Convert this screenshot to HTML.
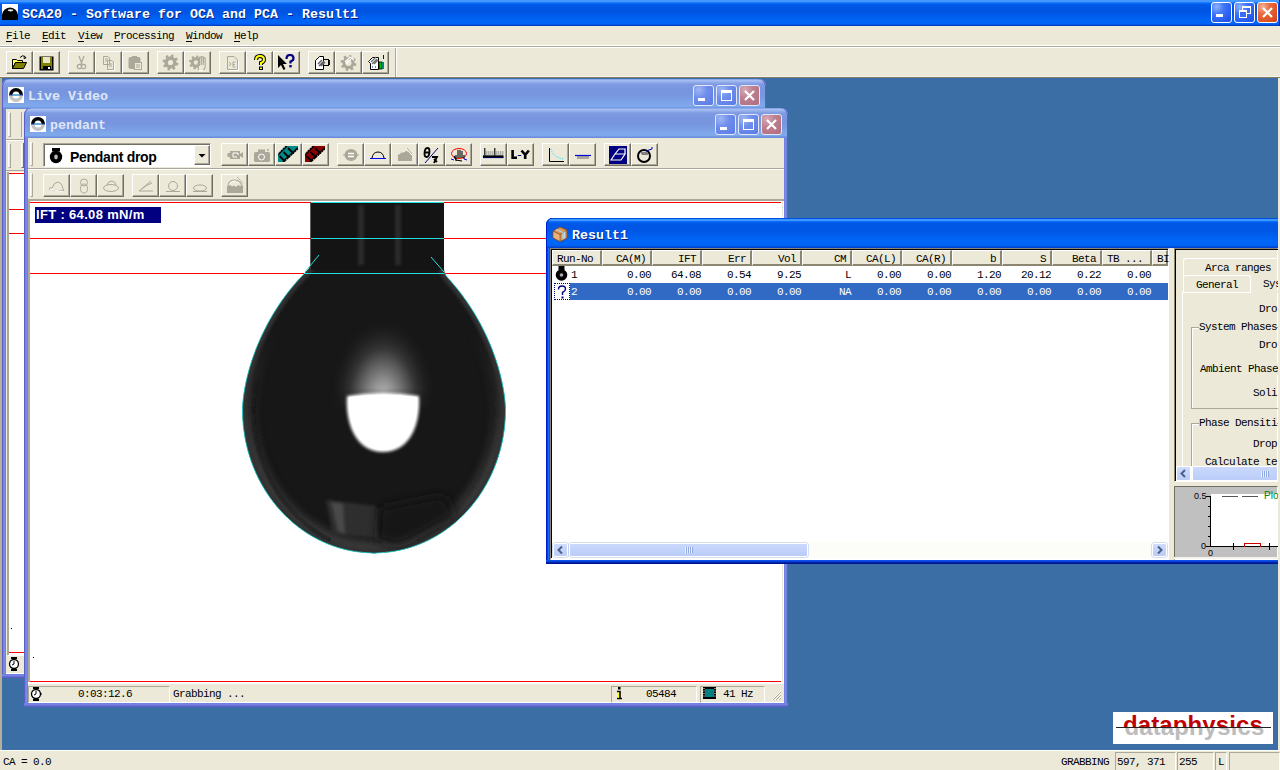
<!DOCTYPE html><html><head><meta charset="utf-8"><title>SCA20</title><style>
*{box-sizing:border-box}
html,body{margin:0;padding:0}
body{width:1280px;height:770px;overflow:hidden;position:relative;background:#ece9d8;font-family:"Liberation Mono",monospace;font-size:12px;color:#000}
.a{position:absolute}
.m{position:absolute;font-family:"Liberation Mono",monospace;font-size:11px;letter-spacing:-0.6px;line-height:12px;white-space:pre}
.tb{position:absolute;width:27px;height:23px;border-style:solid;border-width:1px;border-color:#fff #716f64 #716f64 #fff;box-shadow:inset -1px -1px 0 #aca899;background:#ece9d8}
.tb svg{position:absolute;left:4px;top:3px}
.capT{position:absolute;font-family:"Liberation Mono",monospace;font-weight:bold;font-size:13.33px;line-height:15px;white-space:pre}
.xb{position:absolute;width:21px;height:21px;border:1px solid #fff;border-radius:3px}
.xbA{background:radial-gradient(circle at 25% 20%,#8fb4ff 0,#3f75f8 35%,#2258ee 80%,#1f4fd8 100%)}
.xcA{background:radial-gradient(circle at 25% 20%,#f5b59a 0,#e8693d 35%,#dc4d1f 80%,#c93f16 100%)}
.xbI{background:radial-gradient(circle at 25% 20%,#9fb6f2 0,#6f8eec 40%,#5a7be6 100%);border-color:#e2e8fa}
.xcI{background:radial-gradient(circle at 25% 20%,#d6a9b6 0,#be8090 40%,#ad6d7f 100%);border-color:#e2e8fa}
.sunk{position:absolute;border:1px solid;border-color:#aca899 #fff #fff #aca899}
.grip{position:absolute;width:3px;border-left:1px solid #fff;border-right:1px solid #aca899;border-top:1px solid #fff;border-bottom:1px solid #aca899}
</style></head><body>
<div class="a" style="left:0;top:0;width:1280px;height:26px;background:linear-gradient(to bottom,#4398ff 0px,#4398ff 1.5px,#0a6ffb 3px,#0058e6 5px,#0054e2 12px,#005ff0 17px,#0066f8 22px,#0062f4 24px,#0048d4 25px,#003ac4 26px)"></div>
<div class="a" style="left:1279px;top:0;width:1px;height:26px;background:#0026a0"></div>
<svg class="a" style="left:2px;top:4px" width="16" height="16"><rect width="16" height="16" fill="#fff"/><path d="M0,16 L0,11 Q1,4 8,3.5 Q15,4 16,11 L16,16 Z" fill="#000"/><ellipse cx="8.5" cy="6.3" rx="2.8" ry="1.1" fill="#e8e8e8"/></svg>
<div class="capT" style="left:22px;top:7px;color:#fff;text-shadow:1px 1px 0 #0a1a80">SCA20 - Software for OCA and PCA - Result1</div>
<div class="xb xbA" style="left:1211px;top:2px"><div class="a" style="left:4px;top:11px;width:7px;height:3px;background:#fff"></div></div>
<div class="xb xbA" style="left:1234px;top:2px"><div class="a" style="left:7px;top:3px;width:9px;height:8px;border:1px solid #fff;border-top-width:2px"></div><div class="a" style="left:4px;top:7px;width:8px;height:8px;border:1px solid #fff;border-top-width:2px;background:#3a6cf4"></div></div>
<div class="xb xcA" style="left:1257px;top:2px"><svg class="a" style="left:3px;top:3px" width="13" height="13"><path d="M2,2 L11,11 M11,2 L2,11" stroke="#fff" stroke-width="2.2"/></svg></div>
<div class="m" style="left:6px;top:30px">File</div>
<div class="a" style="left:6px;top:41px;width:6px;height:1px;background:#000"></div>
<div class="m" style="left:42px;top:30px">Edit</div>
<div class="a" style="left:42px;top:41px;width:6px;height:1px;background:#000"></div>
<div class="m" style="left:78px;top:30px">View</div>
<div class="a" style="left:78px;top:41px;width:6px;height:1px;background:#000"></div>
<div class="m" style="left:114px;top:30px">Processing</div>
<div class="a" style="left:114px;top:41px;width:6px;height:1px;background:#000"></div>
<div class="m" style="left:186px;top:30px">Window</div>
<div class="a" style="left:186px;top:41px;width:6px;height:1px;background:#000"></div>
<div class="m" style="left:234px;top:30px">Help</div>
<div class="a" style="left:234px;top:41px;width:6px;height:1px;background:#000"></div>
<div class="a" style="left:0;top:45px;width:1280px;height:1px;background:#fff"></div>
<div class="a" style="left:0;top:46px;width:1280px;height:1px;background:#aca899"></div>
<div class="a" style="left:0;top:47px;width:1280px;height:1px;background:#fff"></div>
<div class="a" style="left:0;top:76px;width:1280px;height:1px;background:#f6f4ea"></div>
<div class="a" style="left:0;top:77px;width:1280px;height:1px;background:#827c69"></div>
<div class="a" style="left:395px;top:48px;width:1px;height:29px;background:#aca899"></div><div class="a" style="left:396px;top:48px;width:1px;height:29px;background:#fff"></div>
<div class="a" style="left:0;top:78px;width:1280px;height:672px;background:#3a6ea5"></div>
<div class="a" style="left:0;top:78px;width:2px;height:672px;background:#b4b09c"></div>
<div class="a" style="left:2px;top:79px;width:764px;height:599px;border-radius:7px 7px 0 0;overflow:hidden;background:#7081e2;box-shadow:inset 1px 0 0 #5b5dc8,inset -1px 0 0 #5b5dc8,inset 2px 0 0 #7583de,inset -2px 0 0 #7583de,inset 3px 0 0 #7a8be2,inset -3px 0 0 #7a8be2,inset 4px 0 0 #7081e2,inset -4px 0 0 #7081e2"><div class="a" style="left:0;top:0;width:764px;height:30px;background:linear-gradient(to bottom,#6e8fe0 0px,#a9c0f2 1px,#a2baf0 2px,#7f9be3 5px,#7896df 10px,#7896df 16px,#7ba0e6 22px,#7fa9ea 26px,#7ea8ea 28px,#6b8bdd 29px,#6b8bdd 30px)"></div><div class="a" style="left:0;top:0;width:764px;height:30px;border-radius:7px 7px 0 0;box-shadow:inset 1px 0 0 #5b5dc8,inset -1px 0 0 #5b5dc8"></div><div class="a" style="left:0;top:595px;width:764px;height:4px;background:linear-gradient(to bottom,#7081e2 0px,#7081e2 1px,#7583de 1px,#7583de 2px,#6a70d6 2px,#6a70d6 3px,#5b5dc8 3px)"></div></div>
<svg class="a" style="left:8px;top:87px" width="16" height="16"><rect width="16" height="16" fill="#fff"/><path d="M1,8 A7,7 0 0 1 15,8 L11.5,8 A3.5,3.5 0 0 0 4.5,8 Z" fill="#000"/><path d="M1,8 A7,7 0 0 0 15,8 L11.5,8 A3.5,3.5 0 0 1 4.5,8 Z" fill="#c4c4c4"/><rect x="1" y="7.5" width="14" height="1" fill="#3030c0"/><rect x="4" y="7.5" width="8" height="1" fill="#40c0c0"/></svg>
<div class="capT" style="left:28px;top:89px;color:#dfe6f7">Live Video</div>
<div class="xb xbI" style="left:693px;top:85px"><div class="a" style="left:4px;top:12px;width:7px;height:3px;background:#fff"></div></div><div class="xb xbI" style="left:716px;top:85px"><div class="a" style="left:4px;top:4px;width:11px;height:11px;border:1px solid #fff;border-top-width:3px"></div></div><div class="xb xcI" style="left:739px;top:85px"><svg class="a" style="left:3px;top:3px" width="13" height="13"><path d="M2,2 L11,11 M11,2 L2,11" stroke="#fff" stroke-width="2.2"/></svg></div>
<div class="a" style="left:6px;top:109px;width:756px;height:565px;background:#ece9d8"></div>
<div class="grip" style="left:8px;top:112px;height:25px"></div>
<div class="grip" style="left:8px;top:143px;height:25px"></div>
<div class="a" style="left:21px;top:112px;width:1px;height:25px;background:#aca899"></div>
<div class="a" style="left:21px;top:143px;width:2px;height:25px;border-left:1px solid #fff;border-bottom:1px solid #716f64;box-shadow:1px 0 0 #716f64"></div>
<div class="a" style="left:6px;top:139px;width:756px;height:1px;background:#aca899"></div>
<div class="a" style="left:6px;top:140px;width:756px;height:1px;background:#fff"></div>
<div class="a" style="left:6px;top:170px;width:756px;height:1px;background:#aca899"></div>
<div class="a" style="left:7px;top:172px;width:755px;height:483px;background:#fff;border-left:2px solid #aca899"></div>
<div class="a" style="left:9px;top:173px;width:752px;height:1px;background:#f00"></div>
<div class="a" style="left:9px;top:209px;width:752px;height:1px;background:#f00"></div>
<div class="a" style="left:9px;top:233px;width:752px;height:1px;background:#f00"></div>
<div class="a" style="left:9px;top:652px;width:752px;height:1px;background:#f00"></div>
<div class="a" style="left:8px;top:655px;width:754px;height:1px;background:#fff"></div>
<svg class="a" style="left:8px;top:657px" width="12" height="14"><path d="M3,1 L9,1 M3,13 L9,13" stroke="#000" stroke-width="2"/><circle cx="6" cy="7" r="4.5" fill="#fff" stroke="#000" stroke-width="1.3"/><path d="M6,7 L6,4 M6,7 L4,8" stroke="#000"/></svg>
<div class="a" style="left:6px;top:673px;width:756px;height:1px;background:#fff"></div>
<div class="a" style="left:24px;top:108px;width:764px;height:599px;border-radius:7px 7px 0 0;overflow:hidden;background:#7081e2;box-shadow:inset 1px 0 0 #5b5dc8,inset -1px 0 0 #5b5dc8,inset 2px 0 0 #7583de,inset -2px 0 0 #7583de,inset 3px 0 0 #7a8be2,inset -3px 0 0 #7a8be2,inset 4px 0 0 #7081e2,inset -4px 0 0 #7081e2"><div class="a" style="left:0;top:0;width:764px;height:30px;background:linear-gradient(to bottom,#6e8fe0 0px,#a9c0f2 1px,#a2baf0 2px,#7f9be3 5px,#7896df 10px,#7896df 16px,#7ba0e6 22px,#7fa9ea 26px,#7ea8ea 28px,#6b8bdd 29px,#6b8bdd 30px)"></div><div class="a" style="left:0;top:0;width:764px;height:30px;border-radius:7px 7px 0 0;box-shadow:inset 1px 0 0 #5b5dc8,inset -1px 0 0 #5b5dc8"></div><div class="a" style="left:0;top:595px;width:764px;height:4px;background:linear-gradient(to bottom,#7081e2 0px,#7081e2 1px,#7583de 1px,#7583de 2px,#6a70d6 2px,#6a70d6 3px,#5b5dc8 3px)"></div></div>
<svg class="a" style="left:30px;top:116px" width="16" height="16"><rect width="16" height="16" fill="#fff"/><path d="M1,8 A7,7 0 0 1 15,8 L11.5,8 A3.5,3.5 0 0 0 4.5,8 Z" fill="#000"/><path d="M1,8 A7,7 0 0 0 15,8 L11.5,8 A3.5,3.5 0 0 1 4.5,8 Z" fill="#c4c4c4"/><rect x="1" y="7.5" width="14" height="1" fill="#3030c0"/><rect x="4" y="7.5" width="8" height="1" fill="#40c0c0"/></svg>
<div class="capT" style="left:50px;top:118px;color:#dfe6f7">pendant</div>
<div class="xb xbI" style="left:715px;top:114px"><div class="a" style="left:4px;top:12px;width:7px;height:3px;background:#fff"></div></div><div class="xb xbI" style="left:738px;top:114px"><div class="a" style="left:4px;top:4px;width:11px;height:11px;border:1px solid #fff;border-top-width:3px"></div></div><div class="xb xcI" style="left:761px;top:114px"><svg class="a" style="left:3px;top:3px" width="13" height="13"><path d="M2,2 L11,11 M11,2 L2,11" stroke="#fff" stroke-width="2.2"/></svg></div>
<div class="a" style="left:28px;top:138px;width:756px;height:565px;background:#ece9d8"></div>
<div class="a" style="left:28px;top:168px;width:756px;height:1px;background:#aca899"></div>
<div class="a" style="left:28px;top:169px;width:756px;height:1px;background:#fff"></div>
<div class="a" style="left:28px;top:199px;width:756px;height:1px;background:#aca899"></div>
<div class="grip" style="left:30px;top:142px;height:24px"></div>
<div class="grip" style="left:30px;top:173px;height:24px"></div>
<div class="a" style="left:43px;top:143px;width:168px;height:24px;background:#fff;border:1px solid;border-color:#aca899 #fff #fff #aca899;box-shadow:inset 1px 1px 0 #716f64"></div>
<div class="a" style="left:194px;top:145px;width:16px;height:20px;background:#ece9d8;border:1px solid;border-color:#fff #716f64 #716f64 #fff;box-shadow:inset -1px -1px 0 #aca899"></div>
<svg class="a" style="left:194px;top:145px" width="16" height="20"><path d="M4.5,9 L11.5,9 L8,12.5 Z" fill="#000"/></svg>
<div class="a" style="left:70px;top:148px;font-family:'Liberation Sans';font-weight:bold;font-size:14px;line-height:18px;white-space:pre;letter-spacing:-0.3px">Pendant drop</div>
<svg class="a" style="left:49px;top:147px" width="14" height="17"><rect x="3" y="1" width="8" height="3.5" fill="#000"/><circle cx="7" cy="10" r="6.2" fill="#000"/><ellipse cx="7" cy="10" rx="1.8" ry="2.4" fill="#bbb"/></svg>
<div class="tb" style="left:6px;top:51px"><svg style="left:4px;top:2px" width="18" height="18" viewBox="0 0 18 18"><path d="M1.5,5.5 L5.5,5.5 L6.5,6.5 L11.5,6.5 L11.5,8.5 L4.5,8.5 L1.5,14.5 Z" fill="#ffff60" stroke="#000"/><path d="M1.5,14.5 L4.5,8.5 L15.5,8.5 L12.5,14.5 Z" fill="#808000" stroke="#000"/><path d="M9,3.5 Q11.5,0.5 14,2.5 L14,4.5 M12.5,4 L14,4.5 L15,3" stroke="#000" fill="none"/></svg></div>
<div class="tb" style="left:33px;top:51px"><svg style="left:4px;top:3px" width="18" height="18" viewBox="0 0 18 18"><rect x="1.5" y="1.5" width="14" height="14" fill="#000"/><rect x="3" y="2" width="11" height="12" fill="#808000"/><rect x="5" y="2" width="7" height="6" fill="#e8e8c8"/><rect x="5" y="11" width="8" height="4" fill="#000"/><rect x="10" y="12" width="2" height="2" fill="#fff"/></svg></div>
<div class="tb" style="left:68px;top:51px"><svg style="left:4px;top:2px" width="18" height="18" viewBox="0 0 18 18"><path d="M6,2 L9,10 M11,2 L8,10" stroke="#aca899" stroke-width="1.2" fill="none"/><circle cx="6.5" cy="12.5" r="2.2" fill="none" stroke="#aca899" stroke-width="1.2"/><circle cx="10.5" cy="12.5" r="2.2" fill="none" stroke="#aca899" stroke-width="1.2"/></svg></div>
<div class="tb" style="left:95px;top:51px"><svg style="left:4px;top:2px" width="18" height="18" viewBox="0 0 18 18"><path d="M3.5,2.5 L8,2.5 L9.5,4 L9.5,10.5 L3.5,10.5 Z M7.5,6.5 L12,6.5 L13.5,8 L13.5,15.5 L7.5,15.5 Z" fill="none" stroke="#aca899"/><path d="M5,5 L8,5 M5,7 L8,7 M9,10 L12,10 M9,12 L12,12" stroke="#aca899"/><path d="M8.5,16.5 L14.5,16.5 L14.5,8.5" stroke="#fff" fill="none"/></svg></div>
<div class="tb" style="left:122px;top:51px"><svg style="left:4px;top:2px" width="18" height="18" viewBox="0 0 18 18"><rect x="1.5" y="3" width="12" height="12" rx="2" fill="#aca899"/><rect x="5" y="2" width="5" height="2" fill="#aca899"/><rect x="7.5" y="8.5" width="7" height="7" fill="#ece9d8" stroke="#aca899"/><path d="M9,11 L13,11 M9,13 L13,13" stroke="#aca899"/></svg></div>
<div class="tb" style="left:157px;top:51px"><svg style="left:4px;top:2px" width="18" height="18" viewBox="0 0 18 18"><path d="M14.5,8.5 L16.5,9.3 L15.9,11.6 L13.8,11.3 L12.7,12.7 L13.6,14.7 L11.6,15.9 L10.3,14.2 L8.5,14.5 L7.7,16.5 L5.4,15.9 L5.7,13.8 L4.3,12.7 L2.3,13.6 L1.1,11.6 L2.8,10.3 L2.5,8.5 L0.5,7.7 L1.1,5.4 L3.2,5.7 L4.3,4.3 L3.4,2.3 L5.4,1.1 L6.7,2.8 L8.5,2.5 L9.3,0.5 L11.6,1.1 L11.3,3.2 L12.7,4.3 L14.7,3.4 L15.9,5.4 L14.2,6.7 Z" fill="#aca899"/><circle cx="8.5" cy="8.5" r="2.6" fill="#ece9d8"/><path d="M6.5,10.5 L10.5,6.5" stroke="#fff" stroke-width="0.8" opacity="0.6"/></svg></div>
<div class="tb" style="left:184px;top:51px"><svg style="left:4px;top:2px" width="18" height="18" viewBox="0 0 18 18"><path d="M12.2,8.5 L14.0,9.2 L13.5,11.2 L11.6,10.9 L10.7,12.2 L11.5,13.9 L9.7,15.0 L8.5,13.5 L7.0,13.7 L6.3,15.5 L4.3,15.0 L4.6,13.1 L3.3,12.2 L1.6,13.0 L0.5,11.2 L2.0,10.0 L1.8,8.5 L0.0,7.8 L0.5,5.8 L2.4,6.1 L3.3,4.8 L2.5,3.1 L4.3,2.0 L5.5,3.5 L7.0,3.3 L7.7,1.5 L9.7,2.0 L9.4,3.9 L10.7,4.8 L12.4,4.0 L13.5,5.8 L12.0,7.0 Z" fill="#aca899"/><circle cx="7" cy="8.5" r="2.2" fill="#ece9d8"/><path d="M9.5,16 L9,9 Q9,8 10,8 L10.5,12 L10.5,3.5 Q11.5,2.5 12.2,3.5 L12.2,11 L12.5,2.8 Q13.5,2 14.2,3 L14.2,11 L14.7,4 Q15.5,3.2 16.2,4.2 L16.2,12 Q16.2,15 14,16.5" fill="#ece9d8" stroke="#aca899" stroke-width="1.1"/><path d="M10,16.8 L15,16.8" stroke="#fff"/></svg></div>
<div class="tb" style="left:219px;top:51px"><svg style="left:4px;top:2px" width="18" height="18" viewBox="0 0 18 18"><path d="M3.5,2.5 L10,2.5 L13.5,6 L13.5,15.5 L3.5,15.5 Z" fill="none" stroke="#aca899"/><path d="M5,8 L7,10 L5,12 M9,8 L9,13 L11.5,13 M9,10.5 L11,10.5 M9,8 L11.5,8" stroke="#aca899" fill="none"/><path d="M4.5,16.5 L14.5,16.5 L14.5,7" stroke="#fff" fill="none"/></svg></div>
<div class="tb" style="left:246px;top:51px"><svg style="left:4px;top:2px" width="18" height="18" viewBox="0 0 18 18"><path d="M5,6 Q5,2 9,2 Q13,2 13,5.5 Q13,8 10,9 L10,11" stroke="#000" stroke-width="4" fill="none"/><path d="M5,6 Q5,2 9,2 Q13,2 13,5.5 Q13,8 10,9 L10,11" stroke="#ffff00" stroke-width="2" fill="none"/><rect x="8" y="12.5" width="4" height="3.5" fill="#000"/><rect x="9" y="13.5" width="2" height="1.5" fill="#ff0"/></svg></div>
<div class="tb" style="left:273px;top:51px"><svg style="left:3px;top:2px" width="18" height="18" viewBox="0 0 18 18"><path d="M1,1 L1,14 L4,11 L6.5,16 L8.5,15 L6,10 L10,10 Z" fill="#000"/><path d="M9.5,5 Q9.5,1 13,1 Q16.5,1 16.5,4.5 Q16.5,6.5 13.5,7.5 L13.5,9.5" stroke="#000080" stroke-width="2.2" fill="none"/><rect x="12.3" y="11" width="2.4" height="2.4" fill="#000080"/></svg></div>
<div class="tb" style="left:308px;top:51px"><svg style="left:4px;top:2px" width="18" height="18" viewBox="0 0 18 18"><path d="M2.5,6.5 L6.5,2.5 L10.5,2.5 L10.5,15.5 L2.5,15.5 Z" fill="#fff" stroke="#000"/><path d="M5,10 L9,6 M6,12 L11,7 M8,12 L12,8" stroke="#606060" stroke-width="1.5"/><path d="M10.5,5.5 L15,5.5 M10.5,11.5 L15,11.5 M15.5,5 L15.5,12" stroke="#000"/><path d="M16.5,6 L16.5,11" stroke="#0000c0"/></svg></div>
<div class="tb" style="left:335px;top:51px"><svg style="left:4px;top:2px" width="18" height="18" viewBox="0 0 18 18"><path d="M14.5,9.0 L16.5,9.8 L15.9,12.1 L13.8,11.8 L12.7,13.2 L13.6,15.2 L11.6,16.4 L10.3,14.7 L8.5,15.0 L7.7,17.0 L5.4,16.4 L5.7,14.3 L4.3,13.2 L2.3,14.1 L1.1,12.1 L2.8,10.8 L2.5,9.0 L0.5,8.2 L1.1,5.9 L3.2,6.2 L4.3,4.8 L3.4,2.8 L5.4,1.6 L6.7,3.3 L8.5,3.0 L9.3,1.0 L11.6,1.6 L11.3,3.7 L12.7,4.8 L14.7,3.9 L15.9,5.9 L14.2,7.2 Z" fill="#aca899"/><circle cx="8.5" cy="9" r="3" fill="#ece9d8"/><path d="M5,8 L10,3 L14,6 M6,10 L11,5" stroke="#fff" fill="none" stroke-width="1.2"/></svg></div>
<div class="tb" style="left:362px;top:51px"><svg style="left:4px;top:2px" width="18" height="18" viewBox="0 0 18 18"><path d="M2.5,6.5 L5.5,3.5 L11.5,3.5 L11.5,15.5 L3.5,15.5 L3.5,9.5 L1.5,7.5 Z" fill="#fff" stroke="#000"/><path d="M4,8 L9,3 M5,10 L10,5 M7,10 L11,6" stroke="#707070" stroke-width="1.3"/><rect x="12" y="8" width="3" height="7" fill="#00c000" stroke="#000" stroke-width="0.8"/><rect x="15" y="8" width="2" height="7" fill="#008080"/><path d="M16.5,1 L16.5,5" stroke="#0000c0"/><path d="M5,13 L6,13 M8,13 L9,13" stroke="#0000c0"/></svg></div>
<div class="tb" style="left:221px;top:143px"><svg style="left:4px;top:2px" width="18" height="18" viewBox="0 0 18 18"><path d="M1.5,7 L4,7 L4,5 L14,5 L14,8 L17,6 L17,12 L14,10 L14,13 L4,13 L4,11 L1.5,11 Z" fill="#aca899"/><path d="M7,7 L12,7 L12,9 M7,7 L7,11 L11,11" stroke="#fff" fill="none"/></svg></div>
<div class="tb" style="left:248px;top:143px"><svg style="left:4px;top:2px" width="18" height="18" viewBox="0 0 18 18"><rect x="1" y="6" width="16" height="10" rx="1.5" fill="#aca899"/><rect x="5" y="3.5" width="7" height="3" fill="#aca899"/><circle cx="8.5" cy="11" r="3" fill="none" stroke="#fff"/><path d="M14,4 L16,4" stroke="#aca899" stroke-width="1.5"/></svg></div>
<div class="tb" style="left:275px;top:143px"><svg style="left:1px;top:1px" width="22" height="18" viewBox="0 0 22 18"><defs><clipPath id="fc008b8b"><polygon points="1,17 1,8.4 8.4,1 21,1 21,4.4 7.5,17"/></clipPath></defs><polygon points="1,17 1,8.4 8.4,1 21,1 21,4.4 7.5,17" fill="#008b8b"/><g clip-path="url(#fc008b8b)"><path d="M0,9.5 L9.5,0 M6.5,17.5 L21.5,3.5" stroke="#000" stroke-width="3.2"/><path d="M0.8,9 L9,0.8 M7,17 L21,4" stroke="#fff" stroke-width="1" stroke-dasharray="1,1.8"/><path d="M2.5,11 L8.5,17 M6.5,7 L12.5,13 M11,3 L17,9" stroke="#000" stroke-width="1.8"/></g></svg></div>
<div class="tb" style="left:302px;top:143px"><svg style="left:1px;top:1px" width="22" height="18" viewBox="0 0 22 18"><defs><clipPath id="fc8b0000"><polygon points="1,17 1,8.4 8.4,1 21,1 21,4.4 7.5,17"/></clipPath></defs><polygon points="1,17 1,8.4 8.4,1 21,1 21,4.4 7.5,17" fill="#8b0000"/><g clip-path="url(#fc8b0000)"><path d="M0,9.5 L9.5,0 M6.5,17.5 L21.5,3.5" stroke="#000" stroke-width="3.2"/><path d="M0.8,9 L9,0.8 M7,17 L21,4" stroke="#fff" stroke-width="1" stroke-dasharray="1,1.8"/><path d="M2.5,11 L8.5,17 M6.5,7 L12.5,13 M11,3 L17,9" stroke="#000" stroke-width="1.8"/></g></svg></div>
<div class="tb" style="left:337px;top:143px"><svg style="left:4px;top:2px" width="18" height="18" viewBox="0 0 18 18"><ellipse cx="9" cy="9" rx="6.5" ry="6" fill="#aca899"/><path d="M1,9 L17,9" stroke="#aca899"/><path d="M6,7.5 L12,7.5 M6,10.5 L12,10.5" stroke="#fff" stroke-width="1.3"/></svg></div>
<div class="tb" style="left:364px;top:143px"><svg style="left:4px;top:2px" width="18" height="18" viewBox="0 0 18 18"><path d="M3,12 Q4,6 9,6 Q14,6 15,12" stroke="#000" fill="none"/><path d="M1,12.5 L17,12.5" stroke="#0000ff"/></svg></div>
<div class="tb" style="left:391px;top:143px"><svg style="left:4px;top:2px" width="18" height="18" viewBox="0 0 18 18"><path d="M2,9 Q4,5 9,5 Q13,5 15,9 L16,9 L16,15 L2,15 Z" fill="#aca899"/><path d="M3,8 Q5,5.5 9,5.5 M10,2 L16,9" stroke="#fff" fill="none"/><path d="M11,2 L16,8" stroke="#aca899" fill="none"/></svg></div>
<div class="tb" style="left:418px;top:143px"><svg style="left:3px;top:2px" width="18" height="18" viewBox="0 0 18 18"><path d="M2.5,8 Q2.5,2 5.5,2 Q7.5,2 7.5,5 Q7.5,11 4.5,11 Q2.5,11 2.5,8 M3,6.5 L7,6.5" stroke="#000" stroke-width="1.8" fill="none"/><path d="M3,17 L16,2" stroke="#000080"/><path d="M10,11 L15,11 L12,17 M12,13 L15,16" stroke="#000" stroke-width="1.8" fill="none"/></svg></div>
<div class="tb" style="left:445px;top:143px"><svg style="left:4px;top:2px" width="18" height="18" viewBox="0 0 18 18"><ellipse cx="9" cy="7.5" rx="7.5" ry="5" fill="none" stroke="#f00"/><path d="M6,15 L6,9 M8,12 L8,4 M10,12 L10,4 M12,12 L12,5 M14,13 L14,9 M4,10 L6,14 L12,15" stroke="#000" stroke-width="1.1" fill="none"/><path d="M1,13 L4,14 M14,13 L17,14" stroke="#00f"/></svg></div>
<div class="tb" style="left:480px;top:143px"><svg style="left:2px;top:2px" width="22" height="16" viewBox="0 0 22 16"><rect x="0" y="9.3" width="20.5" height="2.7" fill="#000"/><rect x="0" y="11.3" width="20.5" height="0.8" fill="#000080"/><path d="M1.8,2 L1.8,9.5 M11.8,2 L11.8,9.5" stroke="#000" stroke-width="1.1"/><path d="M3.8,5 L3.8,9.5 M5.8,5 L5.8,9.5 M7.8,5 L7.8,9.5 M9.8,5 L9.8,9.5 M13.8,5 L13.8,9.5 M15.8,5 L15.8,9.5 M17.8,5 L17.8,9.5 M19.8,5 L19.8,9.5" stroke="#909090" stroke-width="0.9"/></svg></div>
<div class="tb" style="left:507px;top:143px"><svg style="left:2px;top:2px" width="22" height="16" viewBox="0 0 22 16"><path d="M2.6,4 L2.6,11.8 L7,11.8" stroke="#000" stroke-width="2.6" fill="none"/><path d="M7.8,9.5 L11.2,9.5" stroke="#000080" stroke-width="1"/><path d="M11.5,4.5 L15.2,8.8 L18.9,4.5 M15.2,8.5 L15.2,13" stroke="#000" stroke-width="2.6" fill="none"/></svg></div>
<div class="tb" style="left:542px;top:143px"><svg style="left:4px;top:2px" width="18" height="18" viewBox="0 0 18 18"><path d="M2.5,2 L2.5,15.5 L17,15.5" stroke="#000" fill="none"/><path d="M4,3 Q6,11 16,13" stroke="#00e0ff" stroke-dasharray="1,1.2" fill="none"/></svg></div>
<div class="tb" style="left:569px;top:143px"><svg style="left:4px;top:2px" width="18" height="18" viewBox="0 0 18 18"><rect x="3" y="10" width="12" height="3" fill="#aca899"/><path d="M1,9.5 L17,9.5" stroke="#0000e0" stroke-width="1.2"/></svg></div>
<div class="tb" style="left:604px;top:143px"><svg style="left:4px;top:2px" width="18" height="18" viewBox="0 0 18 18"><rect x="0" y="0" width="18" height="18" fill="#000080"/><path d="M2,14 L6,8 L16,8 L12,14 Z M6,8 L10,3 L16,3 L16,8" fill="none" stroke="#fff" stroke-width="1.2"/></svg></div>
<div class="tb" style="left:631px;top:143px"><svg style="left:4px;top:2px" width="18" height="18" viewBox="0 0 18 18"><circle cx="8" cy="10" r="6" fill="none" stroke="#000" stroke-width="2"/><path d="M4,6 L12,6 L12,9 L6,9 Z" fill="#808080"/><path d="M10,5 L16,3 L16,1" stroke="#0000c0" fill="none"/></svg></div>
<div class="tb" style="left:43px;top:174px"><svg style="left:4px;top:2px" width="18" height="18" viewBox="0 0 18 18"><path d="M1,11 L4,11 Q6,5 10,5 Q14,6 15,12 L16,14 L6,13 L1,12" fill="none" stroke="#aca899"/><path d="M2,12 L16,15" stroke="#fff"/></svg></div>
<div class="tb" style="left:70px;top:174px"><svg style="left:4px;top:2px" width="18" height="18" viewBox="0 0 18 18"><circle cx="9" cy="5.5" r="3.5" fill="none" stroke="#aca899"/><ellipse cx="9" cy="11.5" rx="3.5" ry="4.5" fill="none" stroke="#aca899"/></svg></div>
<div class="tb" style="left:97px;top:174px"><svg style="left:4px;top:2px" width="18" height="18" viewBox="0 0 18 18"><ellipse cx="9" cy="11" rx="7.5" ry="3.5" fill="none" stroke="#aca899"/><path d="M5,8 Q6,4 10,4 Q13,4 14,8" fill="none" stroke="#aca899"/></svg></div>
<div class="tb" style="left:132px;top:174px"><svg style="left:4px;top:2px" width="18" height="18" viewBox="0 0 18 18"><path d="M2,14 L16,14 M2,14 L14,4" fill="none" stroke="#aca899"/><path d="M5,12 Q9,8 15,6" fill="none" stroke="#aca899"/></svg></div>
<div class="tb" style="left:159px;top:174px"><svg style="left:4px;top:2px" width="18" height="18" viewBox="0 0 18 18"><circle cx="9" cy="9" r="4.5" fill="none" stroke="#aca899"/><path d="M2,14.5 L16,14.5" stroke="#aca899"/></svg></div>
<div class="tb" style="left:186px;top:174px"><svg style="left:4px;top:2px" width="18" height="18" viewBox="0 0 18 18"><ellipse cx="9" cy="11" rx="6.5" ry="3" fill="none" stroke="#aca899"/><path d="M2,14.5 L16,14.5" stroke="#aca899"/></svg></div>
<div class="tb" style="left:221px;top:174px"><svg style="left:4px;top:1px" width="18" height="18" viewBox="0 0 18 18"><path d="M1,10 L4,9 L6,10.5 L8,9.5 L10,11 L12,9 L14,10 L17,9 L17,17 L1,17 Z" fill="#aca899"/><path d="M2,9.5 Q3,4 9,4 Q14,4 15.5,9" fill="none" stroke="#aca899" stroke-width="1.2"/><path d="M3,8.5 Q5,5 9,5 M10,1 L17,8" stroke="#fff" fill="none"/><path d="M11,1 L17,7.5" stroke="#aca899" fill="none"/></svg></div>
<div class="a" style="left:28px;top:201px;width:756px;height:481px;background:#fff;border-left:2px solid #aca899"></div><div class="a" style="left:28px;top:200px;width:756px;height:1px;background:#aca899"></div>
<div class="a" style="left:782px;top:201px;width:1px;height:481px;background:#ece9d8"></div>
<div class="a" style="left:30px;top:202px;width:751px;height:1px;background:#f00"></div>
<div class="a" style="left:30px;top:238px;width:751px;height:1px;background:#f00"></div>
<div class="a" style="left:30px;top:273px;width:751px;height:1px;background:#f00"></div>
<div class="a" style="left:30px;top:681px;width:751px;height:1px;background:#f00"></div>
<div class="a" style="left:33px;top:657px;width:1px;height:1px;background:#000"></div><div class="a" style="left:11px;top:628px;width:1px;height:1px;background:#000"></div>
<div class="a" style="left:28px;top:682px;width:756px;height:2px;background:#fff"></div>
<div class="a" style="left:28px;top:702px;width:756px;height:1px;background:#fff"></div>
<svg class="a" style="left:30px;top:687px" width="12" height="14"><path d="M3,1 L9,1 M3,13 L9,13" stroke="#000" stroke-width="2"/><circle cx="6" cy="7" r="4.5" fill="#fff" stroke="#000" stroke-width="1.3"/><path d="M6,7 L6,4 M6,7 L4,8" stroke="#000"/><path d="M10.5,7 L12,7" stroke="#000"/></svg>
<div class="sunk" style="left:28px;top:686px;width:142px;height:17px"></div>
<div class="m" style="left:78px;top:688px">0:03:12.6</div>
<div class="m" style="left:173px;top:688px">Grabbing ...</div>
<div class="sunk" style="left:611px;top:686px;width:86px;height:17px"></div>
<div class="sunk" style="left:700px;top:686px;width:65px;height:17px"></div>
<svg class="a" style="left:615px;top:686px" width="8" height="14"><rect x="3" y="1" width="2.5" height="2.5" fill="#000"/><path d="M2,5.5 L5,5.5 L5,12 M2,12.5 L7,12.5" stroke="#000" stroke-width="1.6" fill="none"/><path d="M3.5,6.5 L3.5,12" stroke="#ff0" stroke-width="1"/></svg>
<div class="m" style="left:646px;top:688px">05484</div>
<svg class="a" style="left:703px;top:686px" width="13" height="14"><rect x="0" y="1" width="13" height="12" fill="#000"/><rect x="2" y="3" width="9" height="8" fill="#008080"/><path d="M1,2 L1,12 M12,2 L12,12" stroke="#fff" stroke-dasharray="1,1.5"/></svg>
<div class="m" style="left:723px;top:688px">41 Hz</div>
<svg class="a" style="left:770px;top:689px" width="12" height="12"><path d="M11,2 L2,11 M11,5 L5,11 M11,8 L8,11" stroke="#fff"/><path d="M11,3 L3,11 M11,6 L6,11 M11,9 L9,11" stroke="#aca899"/></svg>
<svg class="a" style="left:0;top:0" width="1280" height="770">
<defs>
<filter id="bl2" x="-50%" y="-50%" width="200%" height="200%"><feGaussianBlur stdDeviation="1.5"/></filter>
<filter id="bl8" x="-50%" y="-50%" width="200%" height="200%"><feGaussianBlur stdDeviation="9"/></filter>
<filter id="bl4" x="-50%" y="-50%" width="200%" height="200%"><feGaussianBlur stdDeviation="4"/></filter>
<clipPath id="dc"><path d="M310.5,202 L310.5,255.0 L310.5,256.0 L310.5,257.0 L310.5,258.0 L310.5,259.0 L310.5,260.0 L310.5,261.0 L310.5,262.0 L310.5,263.0 L310.4,264.0 L310.3,265.0 L310.1,266.0 L309.8,267.0 L309.3,268.0 L308.6,269.0 L307.8,270.0 L306.9,271.0 L306.0,272.0 L305.0,273.0 L304.0,274.0 L303.0,275.0 L302.1,276.0 L301.1,277.0 L300.2,278.0 L299.2,279.0 L298.3,280.0 L297.4,281.0 L296.5,282.0 L295.7,283.0 L294.8,284.0 L293.9,285.0 L293.1,286.0 L292.3,287.0 L291.5,288.0 L290.6,289.0 L289.8,290.0 L289.0,291.0 L288.3,292.0 L287.5,293.0 L286.7,294.0 L286.0,295.0 L285.2,296.0 L284.5,297.0 L283.8,298.0 L283.1,299.0 L282.3,300.0 L281.6,301.0 L280.9,302.0 L280.3,303.0 L279.6,304.0 L278.9,305.0 L278.3,306.0 L277.6,307.0 L277.0,308.0 L276.3,309.0 L275.7,310.0 L275.1,311.0 L274.4,312.0 L273.8,313.0 L273.2,314.0 L272.6,315.0 L272.0,316.0 L271.5,317.0 L270.9,318.0 L270.3,319.0 L269.7,320.0 L269.2,321.0 L268.6,322.0 L268.1,323.0 L267.5,324.0 L267.0,325.0 L266.5,326.0 L266.0,327.0 L265.5,328.0 L265.0,329.0 L264.4,330.0 L264.0,331.0 L263.5,332.0 L263.0,333.0 L262.5,334.0 L262.0,335.0 L261.6,336.0 L261.1,337.0 L260.6,338.0 L260.2,339.0 L259.8,340.0 L259.3,341.0 L258.9,342.0 L258.5,343.0 L258.0,344.0 L257.6,345.0 L257.2,346.0 L256.8,347.0 L256.4,348.0 L256.0,349.0 L255.6,350.0 L255.2,351.0 L254.9,352.0 L254.5,353.0 L254.1,354.0 L253.8,355.0 L253.4,356.0 L253.1,357.0 L252.7,358.0 L252.4,359.0 L252.0,360.0 L251.7,361.0 L251.4,362.0 L251.1,363.0 L250.7,364.0 L250.4,365.0 L250.1,366.0 L249.8,367.0 L249.5,368.0 L249.2,369.0 L249.0,370.0 L248.7,371.0 L248.4,372.0 L248.2,373.0 L247.9,374.0 L247.6,375.0 L247.4,376.0 L247.1,377.0 L246.9,378.0 L246.7,379.0 L246.4,380.0 L246.2,381.0 L246.0,382.0 L245.8,383.0 L245.6,384.0 L245.4,385.0 L245.2,386.0 L245.0,387.0 L244.8,388.0 L244.6,389.0 L244.5,390.0 L244.3,391.0 L244.1,392.0 L244.0,393.0 L243.8,394.0 L243.7,395.0 L243.6,396.0 L243.4,397.0 L243.3,398.0 L243.2,399.0 L243.1,400.0 L243.0,401.0 L242.9,402.0 L242.8,403.0 L242.8,404.0 L242.7,405.0 L242.6,406.0 L242.6,407.0 L242.5,408.0 L242.5,409.0 L242.5,410.0 L242.5,411.0 L242.5,412.0 L242.5,413.0 L242.6,414.0 L242.6,415.0 L242.6,416.0 L242.7,417.0 L242.7,418.0 L242.8,419.0 L242.8,420.0 L242.9,421.0 L243.0,422.0 L243.0,423.0 L243.1,424.0 L243.2,425.0 L243.3,426.0 L243.4,427.0 L243.5,428.0 L243.7,429.0 L243.8,430.0 L243.9,431.0 L244.1,432.0 L244.2,433.0 L244.4,434.0 L244.5,435.0 L244.7,436.0 L244.9,437.0 L245.0,438.0 L245.2,439.0 L245.4,440.0 L245.6,441.0 L245.8,442.0 L246.0,443.0 L246.3,444.0 L246.5,445.0 L246.7,446.0 L247.0,447.0 L247.2,448.0 L247.5,449.0 L247.7,450.0 L248.0,451.0 L248.3,452.0 L248.6,453.0 L248.9,454.0 L249.2,455.0 L249.5,456.0 L249.8,457.0 L250.1,458.0 L250.5,459.0 L250.8,460.0 L251.1,461.0 L251.5,462.0 L251.9,463.0 L252.2,464.0 L252.6,465.0 L253.0,466.0 L253.4,467.0 L253.8,468.0 L254.2,469.0 L254.6,470.0 L255.1,471.0 L255.5,472.0 L255.9,473.0 L256.4,474.0 L256.9,475.0 L257.3,476.0 L257.8,477.0 L258.3,478.0 L258.8,479.0 L259.3,480.0 L259.9,481.0 L260.4,482.0 L260.9,483.0 L261.5,484.0 L262.0,485.0 L262.6,486.0 L263.2,487.0 L263.8,488.0 L264.4,489.0 L265.0,490.0 L265.6,491.0 L266.3,492.0 L266.9,493.0 L267.6,494.0 L268.3,495.0 L268.9,496.0 L269.6,497.0 L270.3,498.0 L271.1,499.0 L271.8,500.0 L272.6,501.0 L273.3,502.0 L274.1,503.0 L274.9,504.0 L275.7,505.0 L276.5,506.0 L277.4,507.0 L278.2,508.0 L279.1,509.0 L280.0,510.0 L280.9,511.0 L281.8,512.0 L282.8,513.0 L283.7,514.0 L284.7,515.0 L285.7,516.0 L286.8,517.0 L287.8,518.0 L288.9,519.0 L290.0,520.0 L291.1,521.0 L292.2,522.0 L293.4,523.0 L294.6,524.0 L295.8,525.0 L297.1,526.0 L298.4,527.0 L299.7,528.0 L301.1,529.0 L302.5,530.0 L303.9,531.0 L305.4,532.0 L306.9,533.0 L308.5,534.0 L310.1,535.0 L311.8,536.0 L313.6,537.0 L315.4,538.0 L317.3,539.0 L319.2,540.0 L321.3,541.0 L323.4,542.0 L325.7,543.0 L328.1,544.0 L330.6,545.0 L333.4,546.0 L336.3,547.0 L339.5,548.0 L343.1,549.0 L347.2,550.0 L352.1,551.0 L358.5,552.0 L374.0,553.3 L389.5,552.0 L395.9,551.0 L400.8,550.0 L404.9,549.0 L408.5,548.0 L411.7,547.0 L414.6,546.0 L417.4,545.0 L419.9,544.0 L422.3,543.0 L424.6,542.0 L426.7,541.0 L428.8,540.0 L430.7,539.0 L432.6,538.0 L434.4,537.0 L436.2,536.0 L437.9,535.0 L439.5,534.0 L441.1,533.0 L442.6,532.0 L444.1,531.0 L445.5,530.0 L446.9,529.0 L448.3,528.0 L449.6,527.0 L450.9,526.0 L452.2,525.0 L453.4,524.0 L454.6,523.0 L455.8,522.0 L456.9,521.0 L458.0,520.0 L459.1,519.0 L460.2,518.0 L461.2,517.0 L462.3,516.0 L463.3,515.0 L464.3,514.0 L465.2,513.0 L466.2,512.0 L467.1,511.0 L468.0,510.0 L468.9,509.0 L469.8,508.0 L470.6,507.0 L471.5,506.0 L472.3,505.0 L473.1,504.0 L473.9,503.0 L474.7,502.0 L475.4,501.0 L476.2,500.0 L476.9,499.0 L477.7,498.0 L478.4,497.0 L479.1,496.0 L479.7,495.0 L480.4,494.0 L481.1,493.0 L481.7,492.0 L482.4,491.0 L483.0,490.0 L483.6,489.0 L484.2,488.0 L484.8,487.0 L485.4,486.0 L486.0,485.0 L486.5,484.0 L487.1,483.0 L487.6,482.0 L488.1,481.0 L488.7,480.0 L489.2,479.0 L489.7,478.0 L490.2,477.0 L490.7,476.0 L491.1,475.0 L491.6,474.0 L492.1,473.0 L492.5,472.0 L492.9,471.0 L493.4,470.0 L493.8,469.0 L494.2,468.0 L494.6,467.0 L495.0,466.0 L495.4,465.0 L495.8,464.0 L496.1,463.0 L496.5,462.0 L496.9,461.0 L497.2,460.0 L497.5,459.0 L497.9,458.0 L498.2,457.0 L498.5,456.0 L498.8,455.0 L499.1,454.0 L499.4,453.0 L499.7,452.0 L500.0,451.0 L500.3,450.0 L500.5,449.0 L500.8,448.0 L501.0,447.0 L501.3,446.0 L501.5,445.0 L501.7,444.0 L502.0,443.0 L502.2,442.0 L502.4,441.0 L502.6,440.0 L502.8,439.0 L503.0,438.0 L503.1,437.0 L503.3,436.0 L503.5,435.0 L503.6,434.0 L503.8,433.0 L503.9,432.0 L504.1,431.0 L504.2,430.0 L504.3,429.0 L504.5,428.0 L504.6,427.0 L504.7,426.0 L504.8,425.0 L504.9,424.0 L505.0,423.0 L505.0,422.0 L505.1,421.0 L505.2,420.0 L505.2,419.0 L505.3,418.0 L505.3,417.0 L505.4,416.0 L505.4,415.0 L505.4,414.0 L505.5,413.0 L505.5,412.0 L505.5,411.0 L505.5,410.0 L505.5,409.0 L505.5,408.0 L505.4,407.0 L505.4,406.0 L505.3,405.0 L505.2,404.0 L505.2,403.0 L505.1,402.0 L505.0,401.0 L504.9,400.0 L504.8,399.0 L504.7,398.0 L504.6,397.0 L504.4,396.0 L504.3,395.0 L504.2,394.0 L504.0,393.0 L503.9,392.0 L503.7,391.0 L503.5,390.0 L503.4,389.0 L503.2,388.0 L503.0,387.0 L502.8,386.0 L502.6,385.0 L502.4,384.0 L502.2,383.0 L502.0,382.0 L501.8,381.0 L501.6,380.0 L501.3,379.0 L501.1,378.0 L500.9,377.0 L500.6,376.0 L500.4,375.0 L500.1,374.0 L499.8,373.0 L499.6,372.0 L499.3,371.0 L499.0,370.0 L498.8,369.0 L498.5,368.0 L498.2,367.0 L497.9,366.0 L497.6,365.0 L497.3,364.0 L496.9,363.0 L496.6,362.0 L496.3,361.0 L496.0,360.0 L495.6,359.0 L495.3,358.0 L494.9,357.0 L494.6,356.0 L494.2,355.0 L493.9,354.0 L493.5,353.0 L493.1,352.0 L492.8,351.0 L492.4,350.0 L492.0,349.0 L491.6,348.0 L491.2,347.0 L490.8,346.0 L490.4,345.0 L490.0,344.0 L489.5,343.0 L489.1,342.0 L488.7,341.0 L488.2,340.0 L487.8,339.0 L487.4,338.0 L486.9,337.0 L486.4,336.0 L486.0,335.0 L485.5,334.0 L485.0,333.0 L484.5,332.0 L484.0,331.0 L483.6,330.0 L483.0,329.0 L482.5,328.0 L482.0,327.0 L481.5,326.0 L481.0,325.0 L480.5,324.0 L479.9,323.0 L479.4,322.0 L478.8,321.0 L478.3,320.0 L477.7,319.0 L477.1,318.0 L476.5,317.0 L476.0,316.0 L475.4,315.0 L474.8,314.0 L474.2,313.0 L473.6,312.0 L472.9,311.0 L472.3,310.0 L471.7,309.0 L471.0,308.0 L470.4,307.0 L469.7,306.0 L469.1,305.0 L468.4,304.0 L467.7,303.0 L467.1,302.0 L466.4,301.0 L465.7,300.0 L464.9,299.0 L464.2,298.0 L463.5,297.0 L462.8,296.0 L462.0,295.0 L461.3,294.0 L460.5,293.0 L459.7,292.0 L459.0,291.0 L458.2,290.0 L457.4,289.0 L456.5,288.0 L455.7,287.0 L454.9,286.0 L454.1,285.0 L453.2,284.0 L452.3,283.0 L451.5,282.0 L450.6,281.0 L449.7,280.0 L448.8,279.0 L447.9,278.0 L447.1,277.0 L446.3,276.0 L445.6,275.0 L445.0,274.0 L444.6,273.0 L444.3,272.0 L444.2,271.0 L444.1,270.0 L444.0,269.0 L444.0,268.0 L444.0,267.0 L444.0,266.0 L444.0,265.0 L444.0,264.0 L444.0,263.0 L444.0,262.0 L444.0,261.0 L444.0,260.0 L444.0,259.0 L444.0,258.0 L444.0,257.0 L444.0,256.0 L444.0,255.0 L444,202 Z"/></clipPath>
<linearGradient id="lm" gradientUnits="userSpaceOnUse" x1="0" y1="330" x2="0" y2="470"><stop offset="0" stop-color="#fff" stop-opacity="0"/><stop offset="1" stop-color="#fff" stop-opacity="1"/></linearGradient>
<mask id="lowmask" maskUnits="userSpaceOnUse" x="0" y="0" width="1280" height="770"><rect x="0" y="0" width="1280" height="770" fill="url(#lm)"/></mask>
<linearGradient id="glow" gradientUnits="userSpaceOnUse" x1="0" y1="305" x2="0" y2="398"><stop offset="0" stop-color="#171717"/><stop offset="0.4" stop-color="#222"/><stop offset="0.75" stop-color="#5a5a5a"/><stop offset="1" stop-color="#b4b4b4"/></linearGradient><filter id="bl6" x="-50%" y="-50%" width="200%" height="200%"><feGaussianBlur stdDeviation="6"/></filter>
<radialGradient id="glowR" cx="0.5" cy="0.5" r="0.5"><stop offset="0" stop-color="#c4c4c4"/><stop offset="0.25" stop-color="#8c8c8c"/><stop offset="0.6" stop-color="#383838"/><stop offset="1" stop-color="#171717" stop-opacity="0"/></radialGradient><linearGradient id="gm" gradientUnits="userSpaceOnUse" x1="0" y1="388" x2="0" y2="412"><stop offset="0" stop-color="#fff"/><stop offset="1" stop-color="#fff" stop-opacity="0"/></linearGradient><mask id="glowmask" maskUnits="userSpaceOnUse" x="0" y="0" width="1280" height="770"><rect x="0" y="0" width="1280" height="770" fill="url(#gm)"/></mask>
<filter id="bl1" x="-50%" y="-50%" width="200%" height="200%"><feGaussianBlur stdDeviation="0.8"/></filter>
</defs>
<path d="M310.5,202 L310.5,255.0 L310.5,256.0 L310.5,257.0 L310.5,258.0 L310.5,259.0 L310.5,260.0 L310.5,261.0 L310.5,262.0 L310.5,263.0 L310.4,264.0 L310.3,265.0 L310.1,266.0 L309.8,267.0 L309.3,268.0 L308.6,269.0 L307.8,270.0 L306.9,271.0 L306.0,272.0 L305.0,273.0 L304.0,274.0 L303.0,275.0 L302.1,276.0 L301.1,277.0 L300.2,278.0 L299.2,279.0 L298.3,280.0 L297.4,281.0 L296.5,282.0 L295.7,283.0 L294.8,284.0 L293.9,285.0 L293.1,286.0 L292.3,287.0 L291.5,288.0 L290.6,289.0 L289.8,290.0 L289.0,291.0 L288.3,292.0 L287.5,293.0 L286.7,294.0 L286.0,295.0 L285.2,296.0 L284.5,297.0 L283.8,298.0 L283.1,299.0 L282.3,300.0 L281.6,301.0 L280.9,302.0 L280.3,303.0 L279.6,304.0 L278.9,305.0 L278.3,306.0 L277.6,307.0 L277.0,308.0 L276.3,309.0 L275.7,310.0 L275.1,311.0 L274.4,312.0 L273.8,313.0 L273.2,314.0 L272.6,315.0 L272.0,316.0 L271.5,317.0 L270.9,318.0 L270.3,319.0 L269.7,320.0 L269.2,321.0 L268.6,322.0 L268.1,323.0 L267.5,324.0 L267.0,325.0 L266.5,326.0 L266.0,327.0 L265.5,328.0 L265.0,329.0 L264.4,330.0 L264.0,331.0 L263.5,332.0 L263.0,333.0 L262.5,334.0 L262.0,335.0 L261.6,336.0 L261.1,337.0 L260.6,338.0 L260.2,339.0 L259.8,340.0 L259.3,341.0 L258.9,342.0 L258.5,343.0 L258.0,344.0 L257.6,345.0 L257.2,346.0 L256.8,347.0 L256.4,348.0 L256.0,349.0 L255.6,350.0 L255.2,351.0 L254.9,352.0 L254.5,353.0 L254.1,354.0 L253.8,355.0 L253.4,356.0 L253.1,357.0 L252.7,358.0 L252.4,359.0 L252.0,360.0 L251.7,361.0 L251.4,362.0 L251.1,363.0 L250.7,364.0 L250.4,365.0 L250.1,366.0 L249.8,367.0 L249.5,368.0 L249.2,369.0 L249.0,370.0 L248.7,371.0 L248.4,372.0 L248.2,373.0 L247.9,374.0 L247.6,375.0 L247.4,376.0 L247.1,377.0 L246.9,378.0 L246.7,379.0 L246.4,380.0 L246.2,381.0 L246.0,382.0 L245.8,383.0 L245.6,384.0 L245.4,385.0 L245.2,386.0 L245.0,387.0 L244.8,388.0 L244.6,389.0 L244.5,390.0 L244.3,391.0 L244.1,392.0 L244.0,393.0 L243.8,394.0 L243.7,395.0 L243.6,396.0 L243.4,397.0 L243.3,398.0 L243.2,399.0 L243.1,400.0 L243.0,401.0 L242.9,402.0 L242.8,403.0 L242.8,404.0 L242.7,405.0 L242.6,406.0 L242.6,407.0 L242.5,408.0 L242.5,409.0 L242.5,410.0 L242.5,411.0 L242.5,412.0 L242.5,413.0 L242.6,414.0 L242.6,415.0 L242.6,416.0 L242.7,417.0 L242.7,418.0 L242.8,419.0 L242.8,420.0 L242.9,421.0 L243.0,422.0 L243.0,423.0 L243.1,424.0 L243.2,425.0 L243.3,426.0 L243.4,427.0 L243.5,428.0 L243.7,429.0 L243.8,430.0 L243.9,431.0 L244.1,432.0 L244.2,433.0 L244.4,434.0 L244.5,435.0 L244.7,436.0 L244.9,437.0 L245.0,438.0 L245.2,439.0 L245.4,440.0 L245.6,441.0 L245.8,442.0 L246.0,443.0 L246.3,444.0 L246.5,445.0 L246.7,446.0 L247.0,447.0 L247.2,448.0 L247.5,449.0 L247.7,450.0 L248.0,451.0 L248.3,452.0 L248.6,453.0 L248.9,454.0 L249.2,455.0 L249.5,456.0 L249.8,457.0 L250.1,458.0 L250.5,459.0 L250.8,460.0 L251.1,461.0 L251.5,462.0 L251.9,463.0 L252.2,464.0 L252.6,465.0 L253.0,466.0 L253.4,467.0 L253.8,468.0 L254.2,469.0 L254.6,470.0 L255.1,471.0 L255.5,472.0 L255.9,473.0 L256.4,474.0 L256.9,475.0 L257.3,476.0 L257.8,477.0 L258.3,478.0 L258.8,479.0 L259.3,480.0 L259.9,481.0 L260.4,482.0 L260.9,483.0 L261.5,484.0 L262.0,485.0 L262.6,486.0 L263.2,487.0 L263.8,488.0 L264.4,489.0 L265.0,490.0 L265.6,491.0 L266.3,492.0 L266.9,493.0 L267.6,494.0 L268.3,495.0 L268.9,496.0 L269.6,497.0 L270.3,498.0 L271.1,499.0 L271.8,500.0 L272.6,501.0 L273.3,502.0 L274.1,503.0 L274.9,504.0 L275.7,505.0 L276.5,506.0 L277.4,507.0 L278.2,508.0 L279.1,509.0 L280.0,510.0 L280.9,511.0 L281.8,512.0 L282.8,513.0 L283.7,514.0 L284.7,515.0 L285.7,516.0 L286.8,517.0 L287.8,518.0 L288.9,519.0 L290.0,520.0 L291.1,521.0 L292.2,522.0 L293.4,523.0 L294.6,524.0 L295.8,525.0 L297.1,526.0 L298.4,527.0 L299.7,528.0 L301.1,529.0 L302.5,530.0 L303.9,531.0 L305.4,532.0 L306.9,533.0 L308.5,534.0 L310.1,535.0 L311.8,536.0 L313.6,537.0 L315.4,538.0 L317.3,539.0 L319.2,540.0 L321.3,541.0 L323.4,542.0 L325.7,543.0 L328.1,544.0 L330.6,545.0 L333.4,546.0 L336.3,547.0 L339.5,548.0 L343.1,549.0 L347.2,550.0 L352.1,551.0 L358.5,552.0 L374.0,553.3 L389.5,552.0 L395.9,551.0 L400.8,550.0 L404.9,549.0 L408.5,548.0 L411.7,547.0 L414.6,546.0 L417.4,545.0 L419.9,544.0 L422.3,543.0 L424.6,542.0 L426.7,541.0 L428.8,540.0 L430.7,539.0 L432.6,538.0 L434.4,537.0 L436.2,536.0 L437.9,535.0 L439.5,534.0 L441.1,533.0 L442.6,532.0 L444.1,531.0 L445.5,530.0 L446.9,529.0 L448.3,528.0 L449.6,527.0 L450.9,526.0 L452.2,525.0 L453.4,524.0 L454.6,523.0 L455.8,522.0 L456.9,521.0 L458.0,520.0 L459.1,519.0 L460.2,518.0 L461.2,517.0 L462.3,516.0 L463.3,515.0 L464.3,514.0 L465.2,513.0 L466.2,512.0 L467.1,511.0 L468.0,510.0 L468.9,509.0 L469.8,508.0 L470.6,507.0 L471.5,506.0 L472.3,505.0 L473.1,504.0 L473.9,503.0 L474.7,502.0 L475.4,501.0 L476.2,500.0 L476.9,499.0 L477.7,498.0 L478.4,497.0 L479.1,496.0 L479.7,495.0 L480.4,494.0 L481.1,493.0 L481.7,492.0 L482.4,491.0 L483.0,490.0 L483.6,489.0 L484.2,488.0 L484.8,487.0 L485.4,486.0 L486.0,485.0 L486.5,484.0 L487.1,483.0 L487.6,482.0 L488.1,481.0 L488.7,480.0 L489.2,479.0 L489.7,478.0 L490.2,477.0 L490.7,476.0 L491.1,475.0 L491.6,474.0 L492.1,473.0 L492.5,472.0 L492.9,471.0 L493.4,470.0 L493.8,469.0 L494.2,468.0 L494.6,467.0 L495.0,466.0 L495.4,465.0 L495.8,464.0 L496.1,463.0 L496.5,462.0 L496.9,461.0 L497.2,460.0 L497.5,459.0 L497.9,458.0 L498.2,457.0 L498.5,456.0 L498.8,455.0 L499.1,454.0 L499.4,453.0 L499.7,452.0 L500.0,451.0 L500.3,450.0 L500.5,449.0 L500.8,448.0 L501.0,447.0 L501.3,446.0 L501.5,445.0 L501.7,444.0 L502.0,443.0 L502.2,442.0 L502.4,441.0 L502.6,440.0 L502.8,439.0 L503.0,438.0 L503.1,437.0 L503.3,436.0 L503.5,435.0 L503.6,434.0 L503.8,433.0 L503.9,432.0 L504.1,431.0 L504.2,430.0 L504.3,429.0 L504.5,428.0 L504.6,427.0 L504.7,426.0 L504.8,425.0 L504.9,424.0 L505.0,423.0 L505.0,422.0 L505.1,421.0 L505.2,420.0 L505.2,419.0 L505.3,418.0 L505.3,417.0 L505.4,416.0 L505.4,415.0 L505.4,414.0 L505.5,413.0 L505.5,412.0 L505.5,411.0 L505.5,410.0 L505.5,409.0 L505.5,408.0 L505.4,407.0 L505.4,406.0 L505.3,405.0 L505.2,404.0 L505.2,403.0 L505.1,402.0 L505.0,401.0 L504.9,400.0 L504.8,399.0 L504.7,398.0 L504.6,397.0 L504.4,396.0 L504.3,395.0 L504.2,394.0 L504.0,393.0 L503.9,392.0 L503.7,391.0 L503.5,390.0 L503.4,389.0 L503.2,388.0 L503.0,387.0 L502.8,386.0 L502.6,385.0 L502.4,384.0 L502.2,383.0 L502.0,382.0 L501.8,381.0 L501.6,380.0 L501.3,379.0 L501.1,378.0 L500.9,377.0 L500.6,376.0 L500.4,375.0 L500.1,374.0 L499.8,373.0 L499.6,372.0 L499.3,371.0 L499.0,370.0 L498.8,369.0 L498.5,368.0 L498.2,367.0 L497.9,366.0 L497.6,365.0 L497.3,364.0 L496.9,363.0 L496.6,362.0 L496.3,361.0 L496.0,360.0 L495.6,359.0 L495.3,358.0 L494.9,357.0 L494.6,356.0 L494.2,355.0 L493.9,354.0 L493.5,353.0 L493.1,352.0 L492.8,351.0 L492.4,350.0 L492.0,349.0 L491.6,348.0 L491.2,347.0 L490.8,346.0 L490.4,345.0 L490.0,344.0 L489.5,343.0 L489.1,342.0 L488.7,341.0 L488.2,340.0 L487.8,339.0 L487.4,338.0 L486.9,337.0 L486.4,336.0 L486.0,335.0 L485.5,334.0 L485.0,333.0 L484.5,332.0 L484.0,331.0 L483.6,330.0 L483.0,329.0 L482.5,328.0 L482.0,327.0 L481.5,326.0 L481.0,325.0 L480.5,324.0 L479.9,323.0 L479.4,322.0 L478.8,321.0 L478.3,320.0 L477.7,319.0 L477.1,318.0 L476.5,317.0 L476.0,316.0 L475.4,315.0 L474.8,314.0 L474.2,313.0 L473.6,312.0 L472.9,311.0 L472.3,310.0 L471.7,309.0 L471.0,308.0 L470.4,307.0 L469.7,306.0 L469.1,305.0 L468.4,304.0 L467.7,303.0 L467.1,302.0 L466.4,301.0 L465.7,300.0 L464.9,299.0 L464.2,298.0 L463.5,297.0 L462.8,296.0 L462.0,295.0 L461.3,294.0 L460.5,293.0 L459.7,292.0 L459.0,291.0 L458.2,290.0 L457.4,289.0 L456.5,288.0 L455.7,287.0 L454.9,286.0 L454.1,285.0 L453.2,284.0 L452.3,283.0 L451.5,282.0 L450.6,281.0 L449.7,280.0 L448.8,279.0 L447.9,278.0 L447.1,277.0 L446.3,276.0 L445.6,275.0 L445.0,274.0 L444.6,273.0 L444.3,272.0 L444.2,271.0 L444.1,270.0 L444.0,269.0 L444.0,268.0 L444.0,267.0 L444.0,266.0 L444.0,265.0 L444.0,264.0 L444.0,263.0 L444.0,262.0 L444.0,261.0 L444.0,260.0 L444.0,259.0 L444.0,258.0 L444.0,257.0 L444.0,256.0 L444.0,255.0 L444,202 Z" fill="#171717"/>
<g clip-path="url(#dc)">
<g mask="url(#lowmask)"><path d="M310.5,202 L310.5,255.0 L310.5,256.0 L310.5,257.0 L310.5,258.0 L310.5,259.0 L310.5,260.0 L310.5,261.0 L310.5,262.0 L310.5,263.0 L310.4,264.0 L310.3,265.0 L310.1,266.0 L309.8,267.0 L309.3,268.0 L308.6,269.0 L307.8,270.0 L306.9,271.0 L306.0,272.0 L305.0,273.0 L304.0,274.0 L303.0,275.0 L302.1,276.0 L301.1,277.0 L300.2,278.0 L299.2,279.0 L298.3,280.0 L297.4,281.0 L296.5,282.0 L295.7,283.0 L294.8,284.0 L293.9,285.0 L293.1,286.0 L292.3,287.0 L291.5,288.0 L290.6,289.0 L289.8,290.0 L289.0,291.0 L288.3,292.0 L287.5,293.0 L286.7,294.0 L286.0,295.0 L285.2,296.0 L284.5,297.0 L283.8,298.0 L283.1,299.0 L282.3,300.0 L281.6,301.0 L280.9,302.0 L280.3,303.0 L279.6,304.0 L278.9,305.0 L278.3,306.0 L277.6,307.0 L277.0,308.0 L276.3,309.0 L275.7,310.0 L275.1,311.0 L274.4,312.0 L273.8,313.0 L273.2,314.0 L272.6,315.0 L272.0,316.0 L271.5,317.0 L270.9,318.0 L270.3,319.0 L269.7,320.0 L269.2,321.0 L268.6,322.0 L268.1,323.0 L267.5,324.0 L267.0,325.0 L266.5,326.0 L266.0,327.0 L265.5,328.0 L265.0,329.0 L264.4,330.0 L264.0,331.0 L263.5,332.0 L263.0,333.0 L262.5,334.0 L262.0,335.0 L261.6,336.0 L261.1,337.0 L260.6,338.0 L260.2,339.0 L259.8,340.0 L259.3,341.0 L258.9,342.0 L258.5,343.0 L258.0,344.0 L257.6,345.0 L257.2,346.0 L256.8,347.0 L256.4,348.0 L256.0,349.0 L255.6,350.0 L255.2,351.0 L254.9,352.0 L254.5,353.0 L254.1,354.0 L253.8,355.0 L253.4,356.0 L253.1,357.0 L252.7,358.0 L252.4,359.0 L252.0,360.0 L251.7,361.0 L251.4,362.0 L251.1,363.0 L250.7,364.0 L250.4,365.0 L250.1,366.0 L249.8,367.0 L249.5,368.0 L249.2,369.0 L249.0,370.0 L248.7,371.0 L248.4,372.0 L248.2,373.0 L247.9,374.0 L247.6,375.0 L247.4,376.0 L247.1,377.0 L246.9,378.0 L246.7,379.0 L246.4,380.0 L246.2,381.0 L246.0,382.0 L245.8,383.0 L245.6,384.0 L245.4,385.0 L245.2,386.0 L245.0,387.0 L244.8,388.0 L244.6,389.0 L244.5,390.0 L244.3,391.0 L244.1,392.0 L244.0,393.0 L243.8,394.0 L243.7,395.0 L243.6,396.0 L243.4,397.0 L243.3,398.0 L243.2,399.0 L243.1,400.0 L243.0,401.0 L242.9,402.0 L242.8,403.0 L242.8,404.0 L242.7,405.0 L242.6,406.0 L242.6,407.0 L242.5,408.0 L242.5,409.0 L242.5,410.0 L242.5,411.0 L242.5,412.0 L242.5,413.0 L242.6,414.0 L242.6,415.0 L242.6,416.0 L242.7,417.0 L242.7,418.0 L242.8,419.0 L242.8,420.0 L242.9,421.0 L243.0,422.0 L243.0,423.0 L243.1,424.0 L243.2,425.0 L243.3,426.0 L243.4,427.0 L243.5,428.0 L243.7,429.0 L243.8,430.0 L243.9,431.0 L244.1,432.0 L244.2,433.0 L244.4,434.0 L244.5,435.0 L244.7,436.0 L244.9,437.0 L245.0,438.0 L245.2,439.0 L245.4,440.0 L245.6,441.0 L245.8,442.0 L246.0,443.0 L246.3,444.0 L246.5,445.0 L246.7,446.0 L247.0,447.0 L247.2,448.0 L247.5,449.0 L247.7,450.0 L248.0,451.0 L248.3,452.0 L248.6,453.0 L248.9,454.0 L249.2,455.0 L249.5,456.0 L249.8,457.0 L250.1,458.0 L250.5,459.0 L250.8,460.0 L251.1,461.0 L251.5,462.0 L251.9,463.0 L252.2,464.0 L252.6,465.0 L253.0,466.0 L253.4,467.0 L253.8,468.0 L254.2,469.0 L254.6,470.0 L255.1,471.0 L255.5,472.0 L255.9,473.0 L256.4,474.0 L256.9,475.0 L257.3,476.0 L257.8,477.0 L258.3,478.0 L258.8,479.0 L259.3,480.0 L259.9,481.0 L260.4,482.0 L260.9,483.0 L261.5,484.0 L262.0,485.0 L262.6,486.0 L263.2,487.0 L263.8,488.0 L264.4,489.0 L265.0,490.0 L265.6,491.0 L266.3,492.0 L266.9,493.0 L267.6,494.0 L268.3,495.0 L268.9,496.0 L269.6,497.0 L270.3,498.0 L271.1,499.0 L271.8,500.0 L272.6,501.0 L273.3,502.0 L274.1,503.0 L274.9,504.0 L275.7,505.0 L276.5,506.0 L277.4,507.0 L278.2,508.0 L279.1,509.0 L280.0,510.0 L280.9,511.0 L281.8,512.0 L282.8,513.0 L283.7,514.0 L284.7,515.0 L285.7,516.0 L286.8,517.0 L287.8,518.0 L288.9,519.0 L290.0,520.0 L291.1,521.0 L292.2,522.0 L293.4,523.0 L294.6,524.0 L295.8,525.0 L297.1,526.0 L298.4,527.0 L299.7,528.0 L301.1,529.0 L302.5,530.0 L303.9,531.0 L305.4,532.0 L306.9,533.0 L308.5,534.0 L310.1,535.0 L311.8,536.0 L313.6,537.0 L315.4,538.0 L317.3,539.0 L319.2,540.0 L321.3,541.0 L323.4,542.0 L325.7,543.0 L328.1,544.0 L330.6,545.0 L333.4,546.0 L336.3,547.0 L339.5,548.0 L343.1,549.0 L347.2,550.0 L352.1,551.0 L358.5,552.0 L374.0,553.3 L389.5,552.0 L395.9,551.0 L400.8,550.0 L404.9,549.0 L408.5,548.0 L411.7,547.0 L414.6,546.0 L417.4,545.0 L419.9,544.0 L422.3,543.0 L424.6,542.0 L426.7,541.0 L428.8,540.0 L430.7,539.0 L432.6,538.0 L434.4,537.0 L436.2,536.0 L437.9,535.0 L439.5,534.0 L441.1,533.0 L442.6,532.0 L444.1,531.0 L445.5,530.0 L446.9,529.0 L448.3,528.0 L449.6,527.0 L450.9,526.0 L452.2,525.0 L453.4,524.0 L454.6,523.0 L455.8,522.0 L456.9,521.0 L458.0,520.0 L459.1,519.0 L460.2,518.0 L461.2,517.0 L462.3,516.0 L463.3,515.0 L464.3,514.0 L465.2,513.0 L466.2,512.0 L467.1,511.0 L468.0,510.0 L468.9,509.0 L469.8,508.0 L470.6,507.0 L471.5,506.0 L472.3,505.0 L473.1,504.0 L473.9,503.0 L474.7,502.0 L475.4,501.0 L476.2,500.0 L476.9,499.0 L477.7,498.0 L478.4,497.0 L479.1,496.0 L479.7,495.0 L480.4,494.0 L481.1,493.0 L481.7,492.0 L482.4,491.0 L483.0,490.0 L483.6,489.0 L484.2,488.0 L484.8,487.0 L485.4,486.0 L486.0,485.0 L486.5,484.0 L487.1,483.0 L487.6,482.0 L488.1,481.0 L488.7,480.0 L489.2,479.0 L489.7,478.0 L490.2,477.0 L490.7,476.0 L491.1,475.0 L491.6,474.0 L492.1,473.0 L492.5,472.0 L492.9,471.0 L493.4,470.0 L493.8,469.0 L494.2,468.0 L494.6,467.0 L495.0,466.0 L495.4,465.0 L495.8,464.0 L496.1,463.0 L496.5,462.0 L496.9,461.0 L497.2,460.0 L497.5,459.0 L497.9,458.0 L498.2,457.0 L498.5,456.0 L498.8,455.0 L499.1,454.0 L499.4,453.0 L499.7,452.0 L500.0,451.0 L500.3,450.0 L500.5,449.0 L500.8,448.0 L501.0,447.0 L501.3,446.0 L501.5,445.0 L501.7,444.0 L502.0,443.0 L502.2,442.0 L502.4,441.0 L502.6,440.0 L502.8,439.0 L503.0,438.0 L503.1,437.0 L503.3,436.0 L503.5,435.0 L503.6,434.0 L503.8,433.0 L503.9,432.0 L504.1,431.0 L504.2,430.0 L504.3,429.0 L504.5,428.0 L504.6,427.0 L504.7,426.0 L504.8,425.0 L504.9,424.0 L505.0,423.0 L505.0,422.0 L505.1,421.0 L505.2,420.0 L505.2,419.0 L505.3,418.0 L505.3,417.0 L505.4,416.0 L505.4,415.0 L505.4,414.0 L505.5,413.0 L505.5,412.0 L505.5,411.0 L505.5,410.0 L505.5,409.0 L505.5,408.0 L505.4,407.0 L505.4,406.0 L505.3,405.0 L505.2,404.0 L505.2,403.0 L505.1,402.0 L505.0,401.0 L504.9,400.0 L504.8,399.0 L504.7,398.0 L504.6,397.0 L504.4,396.0 L504.3,395.0 L504.2,394.0 L504.0,393.0 L503.9,392.0 L503.7,391.0 L503.5,390.0 L503.4,389.0 L503.2,388.0 L503.0,387.0 L502.8,386.0 L502.6,385.0 L502.4,384.0 L502.2,383.0 L502.0,382.0 L501.8,381.0 L501.6,380.0 L501.3,379.0 L501.1,378.0 L500.9,377.0 L500.6,376.0 L500.4,375.0 L500.1,374.0 L499.8,373.0 L499.6,372.0 L499.3,371.0 L499.0,370.0 L498.8,369.0 L498.5,368.0 L498.2,367.0 L497.9,366.0 L497.6,365.0 L497.3,364.0 L496.9,363.0 L496.6,362.0 L496.3,361.0 L496.0,360.0 L495.6,359.0 L495.3,358.0 L494.9,357.0 L494.6,356.0 L494.2,355.0 L493.9,354.0 L493.5,353.0 L493.1,352.0 L492.8,351.0 L492.4,350.0 L492.0,349.0 L491.6,348.0 L491.2,347.0 L490.8,346.0 L490.4,345.0 L490.0,344.0 L489.5,343.0 L489.1,342.0 L488.7,341.0 L488.2,340.0 L487.8,339.0 L487.4,338.0 L486.9,337.0 L486.4,336.0 L486.0,335.0 L485.5,334.0 L485.0,333.0 L484.5,332.0 L484.0,331.0 L483.6,330.0 L483.0,329.0 L482.5,328.0 L482.0,327.0 L481.5,326.0 L481.0,325.0 L480.5,324.0 L479.9,323.0 L479.4,322.0 L478.8,321.0 L478.3,320.0 L477.7,319.0 L477.1,318.0 L476.5,317.0 L476.0,316.0 L475.4,315.0 L474.8,314.0 L474.2,313.0 L473.6,312.0 L472.9,311.0 L472.3,310.0 L471.7,309.0 L471.0,308.0 L470.4,307.0 L469.7,306.0 L469.1,305.0 L468.4,304.0 L467.7,303.0 L467.1,302.0 L466.4,301.0 L465.7,300.0 L464.9,299.0 L464.2,298.0 L463.5,297.0 L462.8,296.0 L462.0,295.0 L461.3,294.0 L460.5,293.0 L459.7,292.0 L459.0,291.0 L458.2,290.0 L457.4,289.0 L456.5,288.0 L455.7,287.0 L454.9,286.0 L454.1,285.0 L453.2,284.0 L452.3,283.0 L451.5,282.0 L450.6,281.0 L449.7,280.0 L448.8,279.0 L447.9,278.0 L447.1,277.0 L446.3,276.0 L445.6,275.0 L445.0,274.0 L444.6,273.0 L444.3,272.0 L444.2,271.0 L444.1,270.0 L444.0,269.0 L444.0,268.0 L444.0,267.0 L444.0,266.0 L444.0,265.0 L444.0,264.0 L444.0,263.0 L444.0,262.0 L444.0,261.0 L444.0,260.0 L444.0,259.0 L444.0,258.0 L444.0,257.0 L444.0,256.0 L444.0,255.0 L444,202 Z" fill="none" stroke="#3a3a3a" stroke-width="24" filter="url(#bl4)"/></g>
<path d="M310.5,202 L310.5,255.0 L310.5,256.0 L310.5,257.0 L310.5,258.0 L310.5,259.0 L310.5,260.0 L310.5,261.0 L310.5,262.0 L310.5,263.0 L310.4,264.0 L310.3,265.0 L310.1,266.0 L309.8,267.0 L309.3,268.0 L308.6,269.0 L307.8,270.0 L306.9,271.0 L306.0,272.0 L305.0,273.0 L304.0,274.0 L303.0,275.0 L302.1,276.0 L301.1,277.0 L300.2,278.0 L299.2,279.0 L298.3,280.0 L297.4,281.0 L296.5,282.0 L295.7,283.0 L294.8,284.0 L293.9,285.0 L293.1,286.0 L292.3,287.0 L291.5,288.0 L290.6,289.0 L289.8,290.0 L289.0,291.0 L288.3,292.0 L287.5,293.0 L286.7,294.0 L286.0,295.0 L285.2,296.0 L284.5,297.0 L283.8,298.0 L283.1,299.0 L282.3,300.0 L281.6,301.0 L280.9,302.0 L280.3,303.0 L279.6,304.0 L278.9,305.0 L278.3,306.0 L277.6,307.0 L277.0,308.0 L276.3,309.0 L275.7,310.0 L275.1,311.0 L274.4,312.0 L273.8,313.0 L273.2,314.0 L272.6,315.0 L272.0,316.0 L271.5,317.0 L270.9,318.0 L270.3,319.0 L269.7,320.0 L269.2,321.0 L268.6,322.0 L268.1,323.0 L267.5,324.0 L267.0,325.0 L266.5,326.0 L266.0,327.0 L265.5,328.0 L265.0,329.0 L264.4,330.0 L264.0,331.0 L263.5,332.0 L263.0,333.0 L262.5,334.0 L262.0,335.0 L261.6,336.0 L261.1,337.0 L260.6,338.0 L260.2,339.0 L259.8,340.0 L259.3,341.0 L258.9,342.0 L258.5,343.0 L258.0,344.0 L257.6,345.0 L257.2,346.0 L256.8,347.0 L256.4,348.0 L256.0,349.0 L255.6,350.0 L255.2,351.0 L254.9,352.0 L254.5,353.0 L254.1,354.0 L253.8,355.0 L253.4,356.0 L253.1,357.0 L252.7,358.0 L252.4,359.0 L252.0,360.0 L251.7,361.0 L251.4,362.0 L251.1,363.0 L250.7,364.0 L250.4,365.0 L250.1,366.0 L249.8,367.0 L249.5,368.0 L249.2,369.0 L249.0,370.0 L248.7,371.0 L248.4,372.0 L248.2,373.0 L247.9,374.0 L247.6,375.0 L247.4,376.0 L247.1,377.0 L246.9,378.0 L246.7,379.0 L246.4,380.0 L246.2,381.0 L246.0,382.0 L245.8,383.0 L245.6,384.0 L245.4,385.0 L245.2,386.0 L245.0,387.0 L244.8,388.0 L244.6,389.0 L244.5,390.0 L244.3,391.0 L244.1,392.0 L244.0,393.0 L243.8,394.0 L243.7,395.0 L243.6,396.0 L243.4,397.0 L243.3,398.0 L243.2,399.0 L243.1,400.0 L243.0,401.0 L242.9,402.0 L242.8,403.0 L242.8,404.0 L242.7,405.0 L242.6,406.0 L242.6,407.0 L242.5,408.0 L242.5,409.0 L242.5,410.0 L242.5,411.0 L242.5,412.0 L242.5,413.0 L242.6,414.0 L242.6,415.0 L242.6,416.0 L242.7,417.0 L242.7,418.0 L242.8,419.0 L242.8,420.0 L242.9,421.0 L243.0,422.0 L243.0,423.0 L243.1,424.0 L243.2,425.0 L243.3,426.0 L243.4,427.0 L243.5,428.0 L243.7,429.0 L243.8,430.0 L243.9,431.0 L244.1,432.0 L244.2,433.0 L244.4,434.0 L244.5,435.0 L244.7,436.0 L244.9,437.0 L245.0,438.0 L245.2,439.0 L245.4,440.0 L245.6,441.0 L245.8,442.0 L246.0,443.0 L246.3,444.0 L246.5,445.0 L246.7,446.0 L247.0,447.0 L247.2,448.0 L247.5,449.0 L247.7,450.0 L248.0,451.0 L248.3,452.0 L248.6,453.0 L248.9,454.0 L249.2,455.0 L249.5,456.0 L249.8,457.0 L250.1,458.0 L250.5,459.0 L250.8,460.0 L251.1,461.0 L251.5,462.0 L251.9,463.0 L252.2,464.0 L252.6,465.0 L253.0,466.0 L253.4,467.0 L253.8,468.0 L254.2,469.0 L254.6,470.0 L255.1,471.0 L255.5,472.0 L255.9,473.0 L256.4,474.0 L256.9,475.0 L257.3,476.0 L257.8,477.0 L258.3,478.0 L258.8,479.0 L259.3,480.0 L259.9,481.0 L260.4,482.0 L260.9,483.0 L261.5,484.0 L262.0,485.0 L262.6,486.0 L263.2,487.0 L263.8,488.0 L264.4,489.0 L265.0,490.0 L265.6,491.0 L266.3,492.0 L266.9,493.0 L267.6,494.0 L268.3,495.0 L268.9,496.0 L269.6,497.0 L270.3,498.0 L271.1,499.0 L271.8,500.0 L272.6,501.0 L273.3,502.0 L274.1,503.0 L274.9,504.0 L275.7,505.0 L276.5,506.0 L277.4,507.0 L278.2,508.0 L279.1,509.0 L280.0,510.0 L280.9,511.0 L281.8,512.0 L282.8,513.0 L283.7,514.0 L284.7,515.0 L285.7,516.0 L286.8,517.0 L287.8,518.0 L288.9,519.0 L290.0,520.0 L291.1,521.0 L292.2,522.0 L293.4,523.0 L294.6,524.0 L295.8,525.0 L297.1,526.0 L298.4,527.0 L299.7,528.0 L301.1,529.0 L302.5,530.0 L303.9,531.0 L305.4,532.0 L306.9,533.0 L308.5,534.0 L310.1,535.0 L311.8,536.0 L313.6,537.0 L315.4,538.0 L317.3,539.0 L319.2,540.0 L321.3,541.0 L323.4,542.0 L325.7,543.0 L328.1,544.0 L330.6,545.0 L333.4,546.0 L336.3,547.0 L339.5,548.0 L343.1,549.0 L347.2,550.0 L352.1,551.0 L358.5,552.0 L374.0,553.3 L389.5,552.0 L395.9,551.0 L400.8,550.0 L404.9,549.0 L408.5,548.0 L411.7,547.0 L414.6,546.0 L417.4,545.0 L419.9,544.0 L422.3,543.0 L424.6,542.0 L426.7,541.0 L428.8,540.0 L430.7,539.0 L432.6,538.0 L434.4,537.0 L436.2,536.0 L437.9,535.0 L439.5,534.0 L441.1,533.0 L442.6,532.0 L444.1,531.0 L445.5,530.0 L446.9,529.0 L448.3,528.0 L449.6,527.0 L450.9,526.0 L452.2,525.0 L453.4,524.0 L454.6,523.0 L455.8,522.0 L456.9,521.0 L458.0,520.0 L459.1,519.0 L460.2,518.0 L461.2,517.0 L462.3,516.0 L463.3,515.0 L464.3,514.0 L465.2,513.0 L466.2,512.0 L467.1,511.0 L468.0,510.0 L468.9,509.0 L469.8,508.0 L470.6,507.0 L471.5,506.0 L472.3,505.0 L473.1,504.0 L473.9,503.0 L474.7,502.0 L475.4,501.0 L476.2,500.0 L476.9,499.0 L477.7,498.0 L478.4,497.0 L479.1,496.0 L479.7,495.0 L480.4,494.0 L481.1,493.0 L481.7,492.0 L482.4,491.0 L483.0,490.0 L483.6,489.0 L484.2,488.0 L484.8,487.0 L485.4,486.0 L486.0,485.0 L486.5,484.0 L487.1,483.0 L487.6,482.0 L488.1,481.0 L488.7,480.0 L489.2,479.0 L489.7,478.0 L490.2,477.0 L490.7,476.0 L491.1,475.0 L491.6,474.0 L492.1,473.0 L492.5,472.0 L492.9,471.0 L493.4,470.0 L493.8,469.0 L494.2,468.0 L494.6,467.0 L495.0,466.0 L495.4,465.0 L495.8,464.0 L496.1,463.0 L496.5,462.0 L496.9,461.0 L497.2,460.0 L497.5,459.0 L497.9,458.0 L498.2,457.0 L498.5,456.0 L498.8,455.0 L499.1,454.0 L499.4,453.0 L499.7,452.0 L500.0,451.0 L500.3,450.0 L500.5,449.0 L500.8,448.0 L501.0,447.0 L501.3,446.0 L501.5,445.0 L501.7,444.0 L502.0,443.0 L502.2,442.0 L502.4,441.0 L502.6,440.0 L502.8,439.0 L503.0,438.0 L503.1,437.0 L503.3,436.0 L503.5,435.0 L503.6,434.0 L503.8,433.0 L503.9,432.0 L504.1,431.0 L504.2,430.0 L504.3,429.0 L504.5,428.0 L504.6,427.0 L504.7,426.0 L504.8,425.0 L504.9,424.0 L505.0,423.0 L505.0,422.0 L505.1,421.0 L505.2,420.0 L505.2,419.0 L505.3,418.0 L505.3,417.0 L505.4,416.0 L505.4,415.0 L505.4,414.0 L505.5,413.0 L505.5,412.0 L505.5,411.0 L505.5,410.0 L505.5,409.0 L505.5,408.0 L505.4,407.0 L505.4,406.0 L505.3,405.0 L505.2,404.0 L505.2,403.0 L505.1,402.0 L505.0,401.0 L504.9,400.0 L504.8,399.0 L504.7,398.0 L504.6,397.0 L504.4,396.0 L504.3,395.0 L504.2,394.0 L504.0,393.0 L503.9,392.0 L503.7,391.0 L503.5,390.0 L503.4,389.0 L503.2,388.0 L503.0,387.0 L502.8,386.0 L502.6,385.0 L502.4,384.0 L502.2,383.0 L502.0,382.0 L501.8,381.0 L501.6,380.0 L501.3,379.0 L501.1,378.0 L500.9,377.0 L500.6,376.0 L500.4,375.0 L500.1,374.0 L499.8,373.0 L499.6,372.0 L499.3,371.0 L499.0,370.0 L498.8,369.0 L498.5,368.0 L498.2,367.0 L497.9,366.0 L497.6,365.0 L497.3,364.0 L496.9,363.0 L496.6,362.0 L496.3,361.0 L496.0,360.0 L495.6,359.0 L495.3,358.0 L494.9,357.0 L494.6,356.0 L494.2,355.0 L493.9,354.0 L493.5,353.0 L493.1,352.0 L492.8,351.0 L492.4,350.0 L492.0,349.0 L491.6,348.0 L491.2,347.0 L490.8,346.0 L490.4,345.0 L490.0,344.0 L489.5,343.0 L489.1,342.0 L488.7,341.0 L488.2,340.0 L487.8,339.0 L487.4,338.0 L486.9,337.0 L486.4,336.0 L486.0,335.0 L485.5,334.0 L485.0,333.0 L484.5,332.0 L484.0,331.0 L483.6,330.0 L483.0,329.0 L482.5,328.0 L482.0,327.0 L481.5,326.0 L481.0,325.0 L480.5,324.0 L479.9,323.0 L479.4,322.0 L478.8,321.0 L478.3,320.0 L477.7,319.0 L477.1,318.0 L476.5,317.0 L476.0,316.0 L475.4,315.0 L474.8,314.0 L474.2,313.0 L473.6,312.0 L472.9,311.0 L472.3,310.0 L471.7,309.0 L471.0,308.0 L470.4,307.0 L469.7,306.0 L469.1,305.0 L468.4,304.0 L467.7,303.0 L467.1,302.0 L466.4,301.0 L465.7,300.0 L464.9,299.0 L464.2,298.0 L463.5,297.0 L462.8,296.0 L462.0,295.0 L461.3,294.0 L460.5,293.0 L459.7,292.0 L459.0,291.0 L458.2,290.0 L457.4,289.0 L456.5,288.0 L455.7,287.0 L454.9,286.0 L454.1,285.0 L453.2,284.0 L452.3,283.0 L451.5,282.0 L450.6,281.0 L449.7,280.0 L448.8,279.0 L447.9,278.0 L447.1,277.0 L446.3,276.0 L445.6,275.0 L445.0,274.0 L444.6,273.0 L444.3,272.0 L444.2,271.0 L444.1,270.0 L444.0,269.0 L444.0,268.0 L444.0,267.0 L444.0,266.0 L444.0,265.0 L444.0,264.0 L444.0,263.0 L444.0,262.0 L444.0,261.0 L444.0,260.0 L444.0,259.0 L444.0,258.0 L444.0,257.0 L444.0,256.0 L444.0,255.0 L444,202 Z" fill="none" stroke="#303030" stroke-width="9" filter="url(#bl2)"/>
<rect x="311" y="202" width="133" height="68" fill="#141414"/>
<rect x="358" y="205" width="6" height="60" fill="#2c2c2c" filter="url(#bl2)"/>
<rect x="395" y="205" width="6" height="60" fill="#2c2c2c" filter="url(#bl2)"/>
<path d="M257.4,380.0 L257.0,382.0 L256.6,384.0 L256.2,386.0 L255.8,388.0 L255.5,390.0 L255.1,392.0 L254.8,394.0 L254.6,396.0 L254.3,398.0 L254.1,400.0 L253.9,402.0 L253.8,404.0 L253.6,406.0 L253.5,408.0 L253.5,410.0 L253.5,412.0 L253.6,414.0 L253.6,416.0 L253.7,418.0 L253.8,420.0 L254.0,422.0 L254.1,424.0 L254.3,426.0 L254.5,428.0 L254.8,430.0 L255.1,432.0 L255.4,434.0 L255.7,436.0 L256.0,438.0 L256.4,440.0 L256.8,442.0 L257.3,444.0 L257.7,446.0 L258.2,448.0 L258.7,450.0 L259.3,452.0 L259.9,454.0 L260.5,456.0 L261.1,458.0 L261.8,460.0 L262.5,462.0 L263.2,464.0 L264.0,466.0 L264.8,468.0 L265.6,470.0 L266.5,472.0 L267.4,474.0 L268.3,476.0 L269.3,478.0 L270.3,480.0 L271.4,482.0 L272.5,484.0 L273.6,486.0 L274.8,488.0 L276.0,490.0 L277.3,492.0 L278.6,494.0 L279.9,496.0 L281.3,498.0 L282.8,500.0 L284.3,502.0 L285.9,504.0 L287.5,506.0 L289.2,508.0 L291.0,510.0 L292.8,512.0 L294.7,514.0 L296.7,516.0 L298.8,518.0 L301.0,520.0 L303.2,522.0 L305.6,524.0 L308.1,526.0 L310.7,528.0 L313.5,530.0 L316.4,532.0 L319.5,534.0 L322.8,536.0 L326.4,538.0 L330.2,540.0" stroke="#121212" stroke-width="1.6" fill="none" filter="url(#bl1)"/>
<path d="M490.6,380.0 L491.0,382.0 L491.4,384.0 L491.8,386.0 L492.2,388.0 L492.5,390.0 L492.9,392.0 L493.2,394.0 L493.4,396.0 L493.7,398.0 L493.9,400.0 L494.1,402.0 L494.2,404.0 L494.4,406.0 L494.5,408.0 L494.5,410.0 L494.5,412.0 L494.4,414.0 L494.4,416.0 L494.3,418.0 L494.2,420.0 L494.0,422.0 L493.9,424.0 L493.7,426.0 L493.5,428.0 L493.2,430.0 L492.9,432.0 L492.6,434.0 L492.3,436.0 L492.0,438.0 L491.6,440.0 L491.2,442.0 L490.7,444.0 L490.3,446.0 L489.8,448.0 L489.3,450.0 L488.7,452.0 L488.1,454.0 L487.5,456.0 L486.9,458.0 L486.2,460.0 L485.5,462.0 L484.8,464.0 L484.0,466.0 L483.2,468.0 L482.4,470.0 L481.5,472.0 L480.6,474.0 L479.7,476.0 L478.7,478.0 L477.7,480.0 L476.6,482.0 L475.5,484.0 L474.4,486.0 L473.2,488.0 L472.0,490.0 L470.7,492.0 L469.4,494.0 L468.1,496.0 L466.7,498.0 L465.2,500.0 L463.7,502.0 L462.1,504.0 L460.5,506.0 L458.8,508.0 L457.0,510.0 L455.2,512.0 L453.3,514.0 L451.3,516.0 L449.2,518.0 L447.0,520.0 L444.8,522.0 L442.4,524.0 L439.9,526.0 L437.3,528.0 L434.5,530.0 L431.6,532.0 L428.5,534.0 L425.2,536.0 L421.6,538.0 L417.8,540.0" stroke="#181818" stroke-width="1.2" fill="none" filter="url(#bl1)" opacity="0.6"/>
<polygon points="326,500 376,506 378,538 333,534" fill="#2e2e2e" filter="url(#bl2)"/>
<polygon points="331,502 343,504 345,534 338,531" fill="#4a4a4a" filter="url(#bl2)"/>
<polygon points="380,508 445,495 455,515 400,545 378,540" fill="#151515" filter="url(#bl6)"/>
<g mask="url(#glowmask)"><ellipse cx="383" cy="400" rx="54" ry="84" fill="url(#glowR)"/></g>

<path d="M347,396 Q383,390 419,396 C421,424 410,452 383,452 C356,452 345,424 347,396 Z" fill="#fff" filter="url(#bl2)"/>
<path d="M349,397 Q383,392 417,397 C419,422 408,450 383,450 C358,450 347,422 349,397 Z" fill="#fff"/>
</g>
<path d="M305.0,273.0 L304.0,274.0 L303.0,275.0 L302.1,276.0 L301.1,277.0 L300.2,278.0 L299.2,279.0 L298.3,280.0 L297.4,281.0 L296.5,282.0 L295.7,283.0 L294.8,284.0 L293.9,285.0 L293.1,286.0 L292.3,287.0 L291.5,288.0 L290.6,289.0 L289.8,290.0 L289.0,291.0 L288.3,292.0 L287.5,293.0 L286.7,294.0 L286.0,295.0 L285.2,296.0 L284.5,297.0 L283.8,298.0 L283.1,299.0 L282.3,300.0 L281.6,301.0 L280.9,302.0 L280.3,303.0 L279.6,304.0 L278.9,305.0 L278.3,306.0 L277.6,307.0 L277.0,308.0 L276.3,309.0 L275.7,310.0 L275.1,311.0 L274.4,312.0 L273.8,313.0 L273.2,314.0 L272.6,315.0 L272.0,316.0 L271.5,317.0 L270.9,318.0 L270.3,319.0 L269.7,320.0 L269.2,321.0 L268.6,322.0 L268.1,323.0 L267.5,324.0 L267.0,325.0 L266.5,326.0 L266.0,327.0 L265.5,328.0 L265.0,329.0 L264.4,330.0 L264.0,331.0 L263.5,332.0 L263.0,333.0 L262.5,334.0 L262.0,335.0 L261.6,336.0 L261.1,337.0 L260.6,338.0 L260.2,339.0 L259.8,340.0 L259.3,341.0 L258.9,342.0 L258.5,343.0 L258.0,344.0 L257.6,345.0 L257.2,346.0 L256.8,347.0 L256.4,348.0 L256.0,349.0 L255.6,350.0 L255.2,351.0 L254.9,352.0 L254.5,353.0 L254.1,354.0 L253.8,355.0 L253.4,356.0 L253.1,357.0 L252.7,358.0 L252.4,359.0 L252.0,360.0 L251.7,361.0 L251.4,362.0 L251.1,363.0 L250.7,364.0 L250.4,365.0 L250.1,366.0 L249.8,367.0 L249.5,368.0 L249.2,369.0 L249.0,370.0 L248.7,371.0 L248.4,372.0 L248.2,373.0 L247.9,374.0 L247.6,375.0 L247.4,376.0 L247.1,377.0 L246.9,378.0 L246.7,379.0 L246.4,380.0 L246.2,381.0 L246.0,382.0 L245.8,383.0 L245.6,384.0 L245.4,385.0 L245.2,386.0 L245.0,387.0 L244.8,388.0 L244.6,389.0 L244.5,390.0 L244.3,391.0 L244.1,392.0 L244.0,393.0 L243.8,394.0 L243.7,395.0 L243.6,396.0 L243.4,397.0 L243.3,398.0 L243.2,399.0 L243.1,400.0 L243.0,401.0 L242.9,402.0 L242.8,403.0 L242.8,404.0 L242.7,405.0 L242.6,406.0 L242.6,407.0 L242.5,408.0 L242.5,409.0 L242.5,410.0 L242.5,411.0 L242.5,412.0 L242.5,413.0 L242.6,414.0 L242.6,415.0 L242.6,416.0 L242.7,417.0 L242.7,418.0 L242.8,419.0 L242.8,420.0 L242.9,421.0 L243.0,422.0 L243.0,423.0 L243.1,424.0 L243.2,425.0 L243.3,426.0 L243.4,427.0 L243.5,428.0 L243.7,429.0 L243.8,430.0 L243.9,431.0 L244.1,432.0 L244.2,433.0 L244.4,434.0 L244.5,435.0 L244.7,436.0 L244.9,437.0 L245.0,438.0 L245.2,439.0 L245.4,440.0 L245.6,441.0 L245.8,442.0 L246.0,443.0 L246.3,444.0 L246.5,445.0 L246.7,446.0 L247.0,447.0 L247.2,448.0 L247.5,449.0 L247.7,450.0 L248.0,451.0 L248.3,452.0 L248.6,453.0 L248.9,454.0 L249.2,455.0 L249.5,456.0 L249.8,457.0 L250.1,458.0 L250.5,459.0 L250.8,460.0 L251.1,461.0 L251.5,462.0 L251.9,463.0 L252.2,464.0 L252.6,465.0 L253.0,466.0 L253.4,467.0 L253.8,468.0 L254.2,469.0 L254.6,470.0 L255.1,471.0 L255.5,472.0 L255.9,473.0 L256.4,474.0 L256.9,475.0 L257.3,476.0 L257.8,477.0 L258.3,478.0 L258.8,479.0 L259.3,480.0 L259.9,481.0 L260.4,482.0 L260.9,483.0 L261.5,484.0 L262.0,485.0 L262.6,486.0 L263.2,487.0 L263.8,488.0 L264.4,489.0 L265.0,490.0 L265.6,491.0 L266.3,492.0 L266.9,493.0 L267.6,494.0 L268.3,495.0 L268.9,496.0 L269.6,497.0 L270.3,498.0 L271.1,499.0 L271.8,500.0 L272.6,501.0 L273.3,502.0 L274.1,503.0 L274.9,504.0 L275.7,505.0 L276.5,506.0 L277.4,507.0 L278.2,508.0 L279.1,509.0 L280.0,510.0 L280.9,511.0 L281.8,512.0 L282.8,513.0 L283.7,514.0 L284.7,515.0 L285.7,516.0 L286.8,517.0 L287.8,518.0 L288.9,519.0 L290.0,520.0 L291.1,521.0 L292.2,522.0 L293.4,523.0 L294.6,524.0 L295.8,525.0 L297.1,526.0 L298.4,527.0 L299.7,528.0 L301.1,529.0 L302.5,530.0 L303.9,531.0 L305.4,532.0 L306.9,533.0 L308.5,534.0 L310.1,535.0 L311.8,536.0 L313.6,537.0 L315.4,538.0 L317.3,539.0 L319.2,540.0 L321.3,541.0 L323.4,542.0 L325.7,543.0 L328.1,544.0 L330.6,545.0 L333.4,546.0 L336.3,547.0 L339.5,548.0 L343.1,549.0 L347.2,550.0 L352.1,551.0 L358.5,552.0 L374.0,553.3 L389.5,552.0 L395.9,551.0 L400.8,550.0 L404.9,549.0 L408.5,548.0 L411.7,547.0 L414.6,546.0 L417.4,545.0 L419.9,544.0 L422.3,543.0 L424.6,542.0 L426.7,541.0 L428.8,540.0 L430.7,539.0 L432.6,538.0 L434.4,537.0 L436.2,536.0 L437.9,535.0 L439.5,534.0 L441.1,533.0 L442.6,532.0 L444.1,531.0 L445.5,530.0 L446.9,529.0 L448.3,528.0 L449.6,527.0 L450.9,526.0 L452.2,525.0 L453.4,524.0 L454.6,523.0 L455.8,522.0 L456.9,521.0 L458.0,520.0 L459.1,519.0 L460.2,518.0 L461.2,517.0 L462.3,516.0 L463.3,515.0 L464.3,514.0 L465.2,513.0 L466.2,512.0 L467.1,511.0 L468.0,510.0 L468.9,509.0 L469.8,508.0 L470.6,507.0 L471.5,506.0 L472.3,505.0 L473.1,504.0 L473.9,503.0 L474.7,502.0 L475.4,501.0 L476.2,500.0 L476.9,499.0 L477.7,498.0 L478.4,497.0 L479.1,496.0 L479.7,495.0 L480.4,494.0 L481.1,493.0 L481.7,492.0 L482.4,491.0 L483.0,490.0 L483.6,489.0 L484.2,488.0 L484.8,487.0 L485.4,486.0 L486.0,485.0 L486.5,484.0 L487.1,483.0 L487.6,482.0 L488.1,481.0 L488.7,480.0 L489.2,479.0 L489.7,478.0 L490.2,477.0 L490.7,476.0 L491.1,475.0 L491.6,474.0 L492.1,473.0 L492.5,472.0 L492.9,471.0 L493.4,470.0 L493.8,469.0 L494.2,468.0 L494.6,467.0 L495.0,466.0 L495.4,465.0 L495.8,464.0 L496.1,463.0 L496.5,462.0 L496.9,461.0 L497.2,460.0 L497.5,459.0 L497.9,458.0 L498.2,457.0 L498.5,456.0 L498.8,455.0 L499.1,454.0 L499.4,453.0 L499.7,452.0 L500.0,451.0 L500.3,450.0 L500.5,449.0 L500.8,448.0 L501.0,447.0 L501.3,446.0 L501.5,445.0 L501.7,444.0 L502.0,443.0 L502.2,442.0 L502.4,441.0 L502.6,440.0 L502.8,439.0 L503.0,438.0 L503.1,437.0 L503.3,436.0 L503.5,435.0 L503.6,434.0 L503.8,433.0 L503.9,432.0 L504.1,431.0 L504.2,430.0 L504.3,429.0 L504.5,428.0 L504.6,427.0 L504.7,426.0 L504.8,425.0 L504.9,424.0 L505.0,423.0 L505.0,422.0 L505.1,421.0 L505.2,420.0 L505.2,419.0 L505.3,418.0 L505.3,417.0 L505.4,416.0 L505.4,415.0 L505.4,414.0 L505.5,413.0 L505.5,412.0 L505.5,411.0 L505.5,410.0 L505.5,409.0 L505.5,408.0 L505.4,407.0 L505.4,406.0 L505.3,405.0 L505.2,404.0 L505.2,403.0 L505.1,402.0 L505.0,401.0 L504.9,400.0 L504.8,399.0 L504.7,398.0 L504.6,397.0 L504.4,396.0 L504.3,395.0 L504.2,394.0 L504.0,393.0 L503.9,392.0 L503.7,391.0 L503.5,390.0 L503.4,389.0 L503.2,388.0 L503.0,387.0 L502.8,386.0 L502.6,385.0 L502.4,384.0 L502.2,383.0 L502.0,382.0 L501.8,381.0 L501.6,380.0 L501.3,379.0 L501.1,378.0 L500.9,377.0 L500.6,376.0 L500.4,375.0 L500.1,374.0 L499.8,373.0 L499.6,372.0 L499.3,371.0 L499.0,370.0 L498.8,369.0 L498.5,368.0 L498.2,367.0 L497.9,366.0 L497.6,365.0 L497.3,364.0 L496.9,363.0 L496.6,362.0 L496.3,361.0 L496.0,360.0 L495.6,359.0 L495.3,358.0 L494.9,357.0 L494.6,356.0 L494.2,355.0 L493.9,354.0 L493.5,353.0 L493.1,352.0 L492.8,351.0 L492.4,350.0 L492.0,349.0 L491.6,348.0 L491.2,347.0 L490.8,346.0 L490.4,345.0 L490.0,344.0 L489.5,343.0 L489.1,342.0 L488.7,341.0 L488.2,340.0 L487.8,339.0 L487.4,338.0 L486.9,337.0 L486.4,336.0 L486.0,335.0 L485.5,334.0 L485.0,333.0 L484.5,332.0 L484.0,331.0 L483.6,330.0 L483.0,329.0 L482.5,328.0 L482.0,327.0 L481.5,326.0 L481.0,325.0 L480.5,324.0 L479.9,323.0 L479.4,322.0 L478.8,321.0 L478.3,320.0 L477.7,319.0 L477.1,318.0 L476.5,317.0 L476.0,316.0 L475.4,315.0 L474.8,314.0 L474.2,313.0 L473.6,312.0 L472.9,311.0 L472.3,310.0 L471.7,309.0 L471.0,308.0 L470.4,307.0 L469.7,306.0 L469.1,305.0 L468.4,304.0 L467.7,303.0 L467.1,302.0 L466.4,301.0 L465.7,300.0 L464.9,299.0 L464.2,298.0 L463.5,297.0 L462.8,296.0 L462.0,295.0 L461.3,294.0 L460.5,293.0 L459.7,292.0 L459.0,291.0 L458.2,290.0 L457.4,289.0 L456.5,288.0 L455.7,287.0 L454.9,286.0 L454.1,285.0 L453.2,284.0 L452.3,283.0 L451.5,282.0 L450.6,281.0 L449.7,280.0 L448.8,279.0 L447.9,278.0 L447.1,277.0 L446.3,276.0 L445.6,275.0 L445.0,274.0 L444.6,273.0 " fill="none" stroke="#22dddd" stroke-width="0.8"/>
<path d="M311,202.5 L444,202.5 M311,238.5 L444,238.5 M304,273.5 L444,273.5" stroke="#22e0e0" stroke-width="1"/>
<path d="M319,255 L305,272 M431,257 L444,272" stroke="#22e0e0" stroke-width="1"/>
</svg>
<div class="a" style="left:35px;top:207px;width:126px;height:16px;background:#000080"></div>
<div class="a" style="left:36px;top:207px;font-family:'Liberation Sans';font-weight:bold;font-size:13px;line-height:16px;color:#fff;white-space:pre;letter-spacing:0.33px">IFT : 64.08 mN/m</div>
<div class="a" style="left:546px;top:218px;width:740px;height:346px;border-radius:7px 7px 0 0;overflow:hidden;background:#0c52e8;box-shadow:inset 1px 0 0 #001ed0,inset -1px 0 0 #001ed0,inset 2px 0 0 #0a3ce8,inset -2px 0 0 #0a3ce8,inset 3px 0 0 #1e66f5,inset -3px 0 0 #1e66f5,inset 4px 0 0 #0c52e8,inset -4px 0 0 #0c52e8"><div class="a" style="left:0;top:0;width:740px;height:30px;background:linear-gradient(to bottom,#0050e0 0px,#0050e0 0.5px,#3d95ff 1.5px,#3d95ff 2.5px,#0a6ef8 3.5px,#0058e6 5px,#0055e5 12px,#0060f0 18px,#0066f8 24px,#0062f4 28px,#0045d0 29px,#0040c8 30px)"></div><div class="a" style="left:0;top:0;width:740px;height:30px;border-radius:7px 7px 0 0;box-shadow:inset 1px 0 0 #001ed0,inset -1px 0 0 #001ed0"></div><div class="a" style="left:0;top:342px;width:740px;height:4px;background:linear-gradient(to bottom,#0c52e8 0px,#0c52e8 1px,#0840d8 1px,#0840d8 2px,#0020b0 2px,#0020b0 3px,#001590 3px)"></div></div>
<div class="a" style="left:550px;top:248px;width:728px;height:312px;background:#ece9d8"></div>
<svg class="a" style="left:552px;top:226px" width="16" height="16"><path d="M1,5 L8,1 L15,4 L15,12 L8,15.5 L1,12 Z" fill="#d89858" stroke="#8a4a1a" stroke-width="0.8"/><path d="M1,5 L8,8.5 L15,4 M8,8.5 L8,15.5" stroke="#8a4a1a" stroke-width="0.8" fill="none"/><path d="M11,6.5 L11,13.5 M12.5,5.5 L12.5,12.5 M4,3.5 L11,6.5" stroke="#b8d8f0" stroke-width="1.2"/><path d="M1.5,6 L7.5,9 L7.5,14.5 L1.5,11.5 Z" fill="#f0b880" opacity="0.8"/></svg>
<div class="capT" style="left:572px;top:228px;color:#fff;text-shadow:1px 1px 0 #0a1a80">Result1</div>
<div class="a" style="left:550px;top:248px;width:619px;height:312px;background:#fff;border:1px solid;border-color:#8a8672 #fff #fff #8a8672"></div>
<div class="a" style="left:551px;top:249px;width:617px;height:1px;background:#000"></div>
<div class="a" style="left:551px;top:249px;width:1px;height:309px;background:#000"></div>
<div class="a" style="left:552px;top:250px;width:50px;height:16px;background:#ece9d8;border-style:solid;border-width:1px 2px 2px 1px;border-color:#fff #8a8672 #8a8672 #fff"></div>
<div class="m" style="left:557px;top:253px">Run-No</div>
<div class="a" style="left:602px;top:250px;width:50px;height:16px;background:#ece9d8;border-style:solid;border-width:1px 2px 2px 1px;border-color:#fff #8a8672 #8a8672 #fff"></div>
<div class="m" style="left:602px;top:253px;width:44px;text-align:right">CA(M)</div>
<div class="a" style="left:652px;top:250px;width:50px;height:16px;background:#ece9d8;border-style:solid;border-width:1px 2px 2px 1px;border-color:#fff #8a8672 #8a8672 #fff"></div>
<div class="m" style="left:652px;top:253px;width:44px;text-align:right">IFT</div>
<div class="a" style="left:702px;top:250px;width:50px;height:16px;background:#ece9d8;border-style:solid;border-width:1px 2px 2px 1px;border-color:#fff #8a8672 #8a8672 #fff"></div>
<div class="m" style="left:702px;top:253px;width:44px;text-align:right">Err</div>
<div class="a" style="left:752px;top:250px;width:50px;height:16px;background:#ece9d8;border-style:solid;border-width:1px 2px 2px 1px;border-color:#fff #8a8672 #8a8672 #fff"></div>
<div class="m" style="left:752px;top:253px;width:44px;text-align:right">Vol</div>
<div class="a" style="left:802px;top:250px;width:50px;height:16px;background:#ece9d8;border-style:solid;border-width:1px 2px 2px 1px;border-color:#fff #8a8672 #8a8672 #fff"></div>
<div class="m" style="left:802px;top:253px;width:44px;text-align:right">CM</div>
<div class="a" style="left:852px;top:250px;width:50px;height:16px;background:#ece9d8;border-style:solid;border-width:1px 2px 2px 1px;border-color:#fff #8a8672 #8a8672 #fff"></div>
<div class="m" style="left:852px;top:253px;width:44px;text-align:right">CA(L)</div>
<div class="a" style="left:902px;top:250px;width:50px;height:16px;background:#ece9d8;border-style:solid;border-width:1px 2px 2px 1px;border-color:#fff #8a8672 #8a8672 #fff"></div>
<div class="m" style="left:902px;top:253px;width:44px;text-align:right">CA(R)</div>
<div class="a" style="left:952px;top:250px;width:50px;height:16px;background:#ece9d8;border-style:solid;border-width:1px 2px 2px 1px;border-color:#fff #8a8672 #8a8672 #fff"></div>
<div class="m" style="left:952px;top:253px;width:44px;text-align:right">b</div>
<div class="a" style="left:1002px;top:250px;width:50px;height:16px;background:#ece9d8;border-style:solid;border-width:1px 2px 2px 1px;border-color:#fff #8a8672 #8a8672 #fff"></div>
<div class="m" style="left:1002px;top:253px;width:44px;text-align:right">S</div>
<div class="a" style="left:1052px;top:250px;width:50px;height:16px;background:#ece9d8;border-style:solid;border-width:1px 2px 2px 1px;border-color:#fff #8a8672 #8a8672 #fff"></div>
<div class="m" style="left:1052px;top:253px;width:44px;text-align:right">Beta</div>
<div class="a" style="left:1102px;top:250px;width:50px;height:16px;background:#ece9d8;border-style:solid;border-width:1px 2px 2px 1px;border-color:#fff #8a8672 #8a8672 #fff"></div>
<div class="m" style="left:1107px;top:253px">TB ...</div>
<div class="a" style="left:1152px;top:250px;width:16px;height:16px;background:#ece9d8;border-style:solid;border-width:1px 2px 2px 1px;border-color:#fff #8a8672 #8a8672 #fff"></div>
<div class="m" style="left:1157px;top:253px">BI</div>
<div class="a" style="left:570px;top:283px;width:598px;height:17px;background:#316ac5"></div>
<div class="m" style="left:571px;top:269px;color:#000">1</div>
<div class="m" style="left:602px;top:269px;width:49px;text-align:right;color:#000">0.00</div>
<div class="m" style="left:652px;top:269px;width:49px;text-align:right;color:#000">64.08</div>
<div class="m" style="left:702px;top:269px;width:49px;text-align:right;color:#000">0.54</div>
<div class="m" style="left:752px;top:269px;width:49px;text-align:right;color:#000">9.25</div>
<div class="m" style="left:802px;top:269px;width:49px;text-align:right;color:#000">L</div>
<div class="m" style="left:852px;top:269px;width:49px;text-align:right;color:#000">0.00</div>
<div class="m" style="left:902px;top:269px;width:49px;text-align:right;color:#000">0.00</div>
<div class="m" style="left:952px;top:269px;width:49px;text-align:right;color:#000">1.20</div>
<div class="m" style="left:1002px;top:269px;width:49px;text-align:right;color:#000">20.12</div>
<div class="m" style="left:1052px;top:269px;width:49px;text-align:right;color:#000">0.22</div>
<div class="m" style="left:1102px;top:269px;width:49px;text-align:right;color:#000">0.00</div>
<div class="m" style="left:571px;top:286px;color:#fff">2</div>
<div class="m" style="left:602px;top:286px;width:49px;text-align:right;color:#fff">0.00</div>
<div class="m" style="left:652px;top:286px;width:49px;text-align:right;color:#fff">0.00</div>
<div class="m" style="left:702px;top:286px;width:49px;text-align:right;color:#fff">0.00</div>
<div class="m" style="left:752px;top:286px;width:49px;text-align:right;color:#fff">0.00</div>
<div class="m" style="left:802px;top:286px;width:49px;text-align:right;color:#fff">NA</div>
<div class="m" style="left:852px;top:286px;width:49px;text-align:right;color:#fff">0.00</div>
<div class="m" style="left:902px;top:286px;width:49px;text-align:right;color:#fff">0.00</div>
<div class="m" style="left:952px;top:286px;width:49px;text-align:right;color:#fff">0.00</div>
<div class="m" style="left:1002px;top:286px;width:49px;text-align:right;color:#fff">0.00</div>
<div class="m" style="left:1052px;top:286px;width:49px;text-align:right;color:#fff">0.00</div>
<div class="m" style="left:1102px;top:286px;width:49px;text-align:right;color:#fff">0.00</div>
<svg class="a" style="left:555px;top:266px" width="13" height="16"><rect x="3.5" y="0" width="6" height="4" fill="#000"/><circle cx="6.5" cy="9" r="5.8" fill="#000"/><circle cx="6.5" cy="9" r="1.8" fill="#aaa"/></svg>
<div class="a" style="left:554px;top:283px;width:16px;height:17px;background:#fff;border:1px dotted #000080"></div>
<svg class="a" style="left:556px;top:285px" width="12" height="14"><path d="M2.5,4.5 Q2.5,1 6,1 Q9.5,1 9.5,4 Q9.5,6 6.5,7.5 L6.5,10" stroke="#000080" stroke-width="1.4" fill="none"/><rect x="5.5" y="11.5" width="2" height="2" fill="#000080"/></svg>
<div class="a" style="left:552px;top:542px;width:616px;height:16px;background:#fcfcf8"></div>
<div class="a" style="left:553px;top:543px;width:15px;height:14px;background:linear-gradient(#cfdcfd,#b9cdf8);border:1px solid #fff;border-radius:2px;box-shadow:0 0 0 0.5px #b0c0e8"></div>
<svg class="a" style="left:553px;top:543px" width="15" height="14"><path d="M9,3.5 L5.5,7 L9,10.5" stroke="#4d6185" stroke-width="2" fill="none"/></svg>
<div class="a" style="left:569px;top:543px;width:239px;height:14px;background:linear-gradient(#cad8fd,#bacdf8);border:1px solid #fff;border-radius:2px;box-shadow:0 0 0 0.5px #b0c0e8"></div>
<svg class="a" style="left:684px;top:546px" width="9" height="8"><path d="M1.5,1 L1.5,7 M3.5,1 L3.5,7 M5.5,1 L5.5,7 M7.5,1 L7.5,7" stroke="#eef2fd"/><path d="M2.5,1 L2.5,7 M4.5,1 L4.5,7 M6.5,1 L6.5,7 M8.5,1 L8.5,7" stroke="#8fa8e0"/></svg>
<div class="a" style="left:1152px;top:543px;width:15px;height:14px;background:linear-gradient(#cfdcfd,#b9cdf8);border:1px solid #fff;border-radius:2px;box-shadow:0 0 0 0.5px #b0c0e8"></div>
<svg class="a" style="left:1152px;top:543px" width="15" height="14"><path d="M6,3.5 L9.5,7 L6,10.5" stroke="#4d6185" stroke-width="2" fill="none"/></svg>
<div class="a" style="left:1174px;top:248px;width:104px;height:234px;border:1px solid;border-color:#8a8672 #fff #fff #8a8672;background:#ece9d8"></div>
<div class="a" style="left:1175px;top:249px;width:103px;height:1px;background:#000"></div>
<div class="a" style="left:1175px;top:249px;width:1px;height:232px;background:#000"></div>
<div class="a" style="left:1183px;top:258px;width:95px;height:18px;border:1px solid #fff;border-bottom:none;border-right:none;border-radius:3px 0 0 0"></div>
<div class="a" style="left:1183px;top:275px;width:68px;height:18px;border:1px solid #fff;border-bottom:none;border-radius:3px 3px 0 0;background:#ece9d8"></div>
<div class="m" style="left:1205px;top:262px">Arca ranges</div>
<div class="m" style="left:1196px;top:279px">General</div>
<div class="m" style="left:1263px;top:278px">Sys</div>
<div class="a" style="left:1182px;top:292px;width:96px;height:174px;border-left:1px solid #fff;border-top:1px solid #fff"></div>
<div class="a" style="left:1251px;top:291px;width:27px;height:2px;background:#ece9d8"></div>
<div class="m" style="left:1259px;top:303px;background:#ece9d8">Dro</div>
<div class="m" style="left:1199px;top:321px;background:#ece9d8">System Phases</div>
<div class="m" style="left:1259px;top:339px;background:#ece9d8">Dro</div>
<div class="m" style="left:1200px;top:363px;background:#ece9d8">Ambient Phase</div>
<div class="m" style="left:1253px;top:387px;background:#ece9d8">Soli</div>
<div class="m" style="left:1199px;top:417px;background:#ece9d8">Phase Densiti</div>
<div class="m" style="left:1253px;top:438px;background:#ece9d8">Drop</div>
<div class="m" style="left:1205px;top:456px;background:#ece9d8">Calculate te</div>
<div class="a" style="left:1191px;top:327px;width:87px;height:82px;border:1px solid #aca899;border-right:none;box-shadow:inset 1px 1px 0 #fff"></div>
<div class="a" style="left:1191px;top:423px;width:87px;height:50px;border:1px solid #aca899;border-right:none;border-bottom:none;box-shadow:inset 1px 1px 0 #fff"></div>
<div class="m" style="left:1199px;top:321px;background:#ece9d8">System Phases</div>
<div class="m" style="left:1199px;top:417px;background:#ece9d8">Phase Densiti</div>
<div class="a" style="left:1176px;top:466px;width:102px;height:15px;background:#fcfcf8"></div>
<div class="a" style="left:1176px;top:466px;width:15px;height:15px;background:linear-gradient(#cfdcfd,#b9cdf8);border:1px solid #fff;border-radius:2px"></div>
<svg class="a" style="left:1176px;top:466px" width="15" height="15"><path d="M9,4 L5.5,7.5 L9,11" stroke="#4d6185" stroke-width="2" fill="none"/></svg>
<div class="a" style="left:1192px;top:466px;width:86px;height:15px;background:linear-gradient(#cad8fd,#bacdf8);border:1px solid #fff;border-radius:2px"></div>
<svg class="a" style="left:1260px;top:470px" width="9" height="8"><path d="M1.5,1 L1.5,7 M3.5,1 L3.5,7 M5.5,1 L5.5,7 M7.5,1 L7.5,7" stroke="#eef2fd"/><path d="M2.5,1 L2.5,7 M4.5,1 L4.5,7 M6.5,1 L6.5,7 M8.5,1 L8.5,7" stroke="#8fa8e0"/></svg>
<div class="a" style="left:1174px;top:486px;width:104px;height:74px;background:#c0c0c0;border:1px solid;border-color:#716f64 #fff #fff #716f64"></div>
<div class="a" style="left:1211px;top:494px;width:67px;height:53px;background:#fff"></div>
<div class="a" style="left:1210px;top:496px;width:1px;height:51px;background:#000"></div>
<div class="a" style="left:1206px;top:546px;width:72px;height:1px;background:#000"></div>
<div class="a" style="left:1206px;top:496px;width:4px;height:1px;background:#000"></div>
<div class="a" style="left:1208px;top:506px;width:2px;height:1px;background:#000"></div>
<div class="a" style="left:1208px;top:516px;width:2px;height:1px;background:#000"></div>
<div class="a" style="left:1208px;top:526px;width:2px;height:1px;background:#000"></div>
<div class="a" style="left:1208px;top:536px;width:2px;height:1px;background:#000"></div>
<div class="a" style="left:1233px;top:543px;width:1px;height:7px;background:#000"></div>
<div class="a" style="left:1269px;top:543px;width:1px;height:7px;background:#000"></div>
<div class="a" style="left:1222px;top:496px;width:16px;height:1px;background:#555"></div><div class="a" style="left:1242px;top:496px;width:16px;height:1px;background:#555"></div>
<div class="a" style="left:1194px;top:491px;font-family:'Liberation Sans';font-size:9px;line-height:10px">0.5</div>
<div class="a" style="left:1201px;top:541px;font-family:'Liberation Sans';font-size:9px;line-height:10px">0</div>
<div class="a" style="left:1208px;top:548px;font-family:'Liberation Sans';font-size:9px;line-height:10px">0</div>
<div class="a" style="left:1264px;top:490px;font-family:'Liberation Sans';font-size:10px;line-height:12px;color:#080">Plo</div>
<div class="a" style="left:1244px;top:543px;width:17px;height:4px;border:1px solid #c00;border-bottom:none"></div>
<div class="a" style="left:1174px;top:557px;width:104px;height:2px;background:#f6f4ea"></div>
<div class="a" style="left:1278px;top:78px;width:2px;height:672px;background:#ece9d8"></div>
<div class="a" style="left:1113px;top:712px;width:160px;height:32px;background:#fff;overflow:hidden"><div class="a" style="left:11.5px;top:-0.5px;font-family:'Liberation Sans';font-weight:bold;font-size:24px;line-height:30px;color:#bcbcbc;white-space:pre;letter-spacing:0.1px">dataphysics</div><div class="a" style="left:0;top:0;width:160px;height:15px;overflow:hidden;background:#fff"><div class="a" style="left:10px;top:-2.5px;font-family:'Liberation Sans';font-weight:bold;font-size:24px;line-height:30px;color:#c00000;white-space:pre;letter-spacing:0.1px">dataphysics</div></div><div class="a" style="left:3px;top:15px;width:155px;height:1px;background:#222"></div></div>
<div class="a" style="left:0;top:750px;width:1280px;height:1px;background:#fff"></div>
<div class="m" style="left:3px;top:756px">CA = 0.0</div>
<div class="m" style="left:1061px;top:756px">GRABBING</div>
<div class="sunk" style="left:1115px;top:752px;width:61px;height:20px"></div>
<div class="sunk" style="left:1177px;top:752px;width:37px;height:20px"></div>
<div class="sunk" style="left:1215px;top:752px;width:12px;height:20px"></div>
<div class="sunk" style="left:1229px;top:752px;width:51px;height:20px"></div>
<div class="m" style="left:1117px;top:756px">597, 371</div>
<div class="m" style="left:1179px;top:756px">255</div>
<div class="m" style="left:1218px;top:756px">L</div>
</body></html>
